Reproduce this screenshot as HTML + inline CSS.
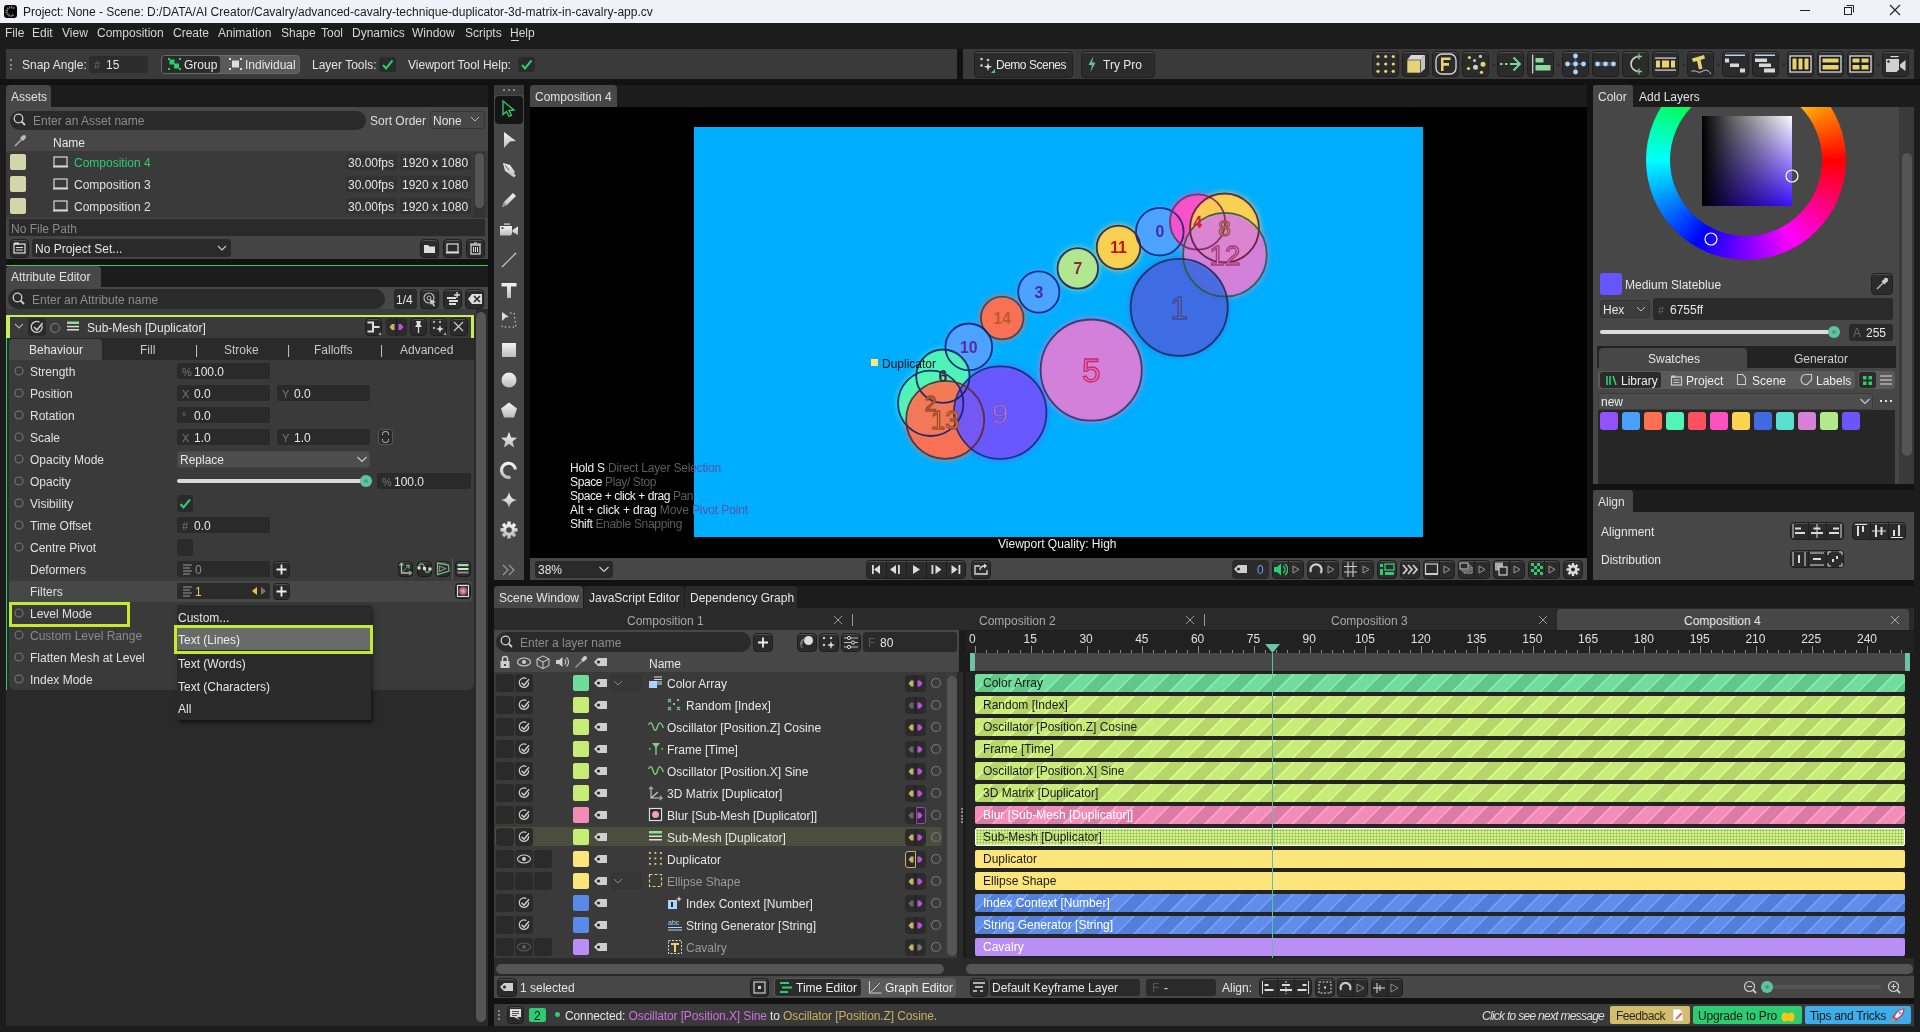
<!DOCTYPE html><html><head><meta charset="utf-8"><style>
html,body{margin:0;padding:0;}
body{width:1920px;height:1032px;position:relative;overflow:hidden;background:#1c1c1c;font-family:"Liberation Sans",sans-serif;font-size:12px;}
body div{position:absolute;box-sizing:border-box;}
.t{position:absolute;white-space:nowrap;line-height:14px;height:14px;}
</style></head><body>
<div style="left:0px;top:0px;width:1920px;height:23px;background:#eff2f9;"></div>
<div style="left:3.5px;top:4.5px;width:13px;height:13px;background:#050505;border-radius:3px;"></div>
<svg style="position:absolute;left:3.5px;top:4.5px;" width="13" height="13" viewBox="0 0 13 13"><path d="M10 3.5 A4.3 4.3 0 1 0 10 9.5" fill="none" stroke="#8a8a8a" stroke-width="2.2" stroke-dasharray="1.2 0.8"/></svg>
<span class="t" style="left:23px;top:5px;color:#1b1b1b;font-size:12px;">Project: None - Scene: D:/DATA/AI Creator/Cavalry/advanced-cavalry-technique-duplicator-3d-matrix-in-cavalry-app.cv</span>
<svg style="position:absolute;left:1798px;top:3px;" width="14" height="14" viewBox="0 0 14 14"><line x1="2" y1="7.5" x2="12" y2="7.5" stroke="#222" stroke-width="1"/></svg>
<svg style="position:absolute;left:1842px;top:3px;" width="14" height="14" viewBox="0 0 14 14"><rect x="2.5" y="4.5" width="7" height="7" fill="none" stroke="#222"/><path d="M4.5 2.5 H11.5 V9.5" fill="none" stroke="#222"/></svg>
<svg style="position:absolute;left:1888px;top:3px;" width="14" height="14" viewBox="0 0 14 14"><path d="M2 2 L12 12 M12 2 L2 12" stroke="#222" stroke-width="1.1"/></svg>
<span class="t" style="left:5px;top:26px;color:#d6d6d6;font-size:12px;">File</span>
<span class="t" style="left:32px;top:26px;color:#d6d6d6;font-size:12px;">Edit</span>
<span class="t" style="left:62px;top:26px;color:#d6d6d6;font-size:12px;">View</span>
<span class="t" style="left:97px;top:26px;color:#d6d6d6;font-size:12px;">Composition</span>
<span class="t" style="left:173px;top:26px;color:#d6d6d6;font-size:12px;">Create</span>
<span class="t" style="left:218px;top:26px;color:#d6d6d6;font-size:12px;">Animation</span>
<span class="t" style="left:281px;top:26px;color:#d6d6d6;font-size:12px;">Shape</span>
<span class="t" style="left:321px;top:26px;color:#d6d6d6;font-size:12px;">Tool</span>
<span class="t" style="left:352px;top:26px;color:#d6d6d6;font-size:12px;">Dynamics</span>
<span class="t" style="left:412px;top:26px;color:#d6d6d6;font-size:12px;">Window</span>
<span class="t" style="left:465px;top:26px;color:#d6d6d6;font-size:12px;">Scripts</span>
<span class="t" style="left:510px;top:26px;color:#d6d6d6;font-size:12px;">Help</span>
<div style="left:6px;top:49px;width:951px;height:30px;background:#3a3a3a;"></div>
<div style="left:963px;top:49px;width:951px;height:30px;background:#3a3a3a;"></div>
<div style="left:0px;top:79px;width:1920px;height:6px;background:#121212;"></div>
<div style="left:10px;top:59px;width:2px;height:2px;background:#8a8a8a"></div>
<div style="left:10px;top:63.5px;width:2px;height:2px;background:#8a8a8a"></div>
<div style="left:10px;top:68px;width:2px;height:2px;background:#8a8a8a"></div>
<div style="left:983px;top:59px;width:2px;height:2px;background:#8a8a8a"></div>
<div style="left:983px;top:63.5px;width:2px;height:2px;background:#8a8a8a"></div>
<div style="left:983px;top:68px;width:2px;height:2px;background:#8a8a8a"></div>
<span class="t" style="left:22px;top:58px;color:#e4e4e4;font-size:12px;">Snap Angle:</span>
<div style="left:89px;top:56px;width:59px;height:17px;background:#2c2c2c;border-radius:3px;"></div>
<span class="t" style="left:94px;top:58px;color:#6a6a6a;font-size:11px;">#</span>
<span class="t" style="left:106px;top:58px;color:#e4e4e4;font-size:12px;">15</span>
<div style="left:161px;top:55px;width:139px;height:19px;background:#5a5a5a;border-radius:4px;border:1px solid #6a6a6a;"></div>
<div style="left:162px;top:56px;width:58px;height:17px;background:#2a2a2a;border-radius:3px;"></div>
<svg style="position:absolute;left:168px;top:58px;" width="13" height="12" viewBox="0 0 13 12"><rect x="0" y="0" width="2" height="2" fill="#2ecc71"/><rect x="11" y="0" width="2" height="2" fill="#2ecc71"/><rect x="0" y="10" width="2" height="2" fill="#2ecc71"/><rect x="11" y="10" width="2" height="2" fill="#2ecc71"/><rect x="1.5" y="1.5" width="5" height="5" fill="#2ecc71"/><rect x="6" y="5.5" width="5" height="5" fill="#2ecc71"/></svg>
<span class="t" style="left:184px;top:58px;color:#e8e8e8;font-size:12px;">Group</span>
<svg style="position:absolute;left:229px;top:58px;" width="13" height="12" viewBox="0 0 13 12"><rect x="0" y="0" width="2" height="2" fill="#ddd"/><rect x="11" y="0" width="2" height="2" fill="#ddd"/><rect x="0" y="10" width="2" height="2" fill="#ddd"/><rect x="11" y="10" width="2" height="2" fill="#ddd"/><rect x="3" y="2.5" width="7" height="7" fill="#ddd"/></svg>
<span class="t" style="left:245px;top:58px;color:#e8e8e8;font-size:12px;">Individual</span>
<span class="t" style="left:312px;top:58px;color:#e4e4e4;font-size:12px;">Layer Tools:</span>
<div style="left:379px;top:57px;width:17px;height:15px;background:#2a2a2a;border-radius:3px;"></div>
<svg style="position:absolute;left:380px;top:58px;" width="15" height="13" viewBox="0 0 15 13"><path d="M3 7 L6 10.5 L12.5 2.5" fill="none" stroke="#2ecc71" stroke-width="2"/></svg>
<span class="t" style="left:408px;top:58px;color:#e4e4e4;font-size:12px;">Viewport Tool Help:</span>
<div style="left:518px;top:57px;width:17px;height:15px;background:#2a2a2a;border-radius:3px;"></div>
<svg style="position:absolute;left:519px;top:58px;" width="15" height="13" viewBox="0 0 15 13"><path d="M3 7 L6 10.5 L12.5 2.5" fill="none" stroke="#2ecc71" stroke-width="2"/></svg>
<div style="left:974px;top:51px;width:99px;height:27px;background:#2b2b2b;background:#2b2b2b;border:1px solid #1f1f1f;border-radius:4px;box-shadow:inset 0 1px 0 #525252;"></div>
<svg style="position:absolute;left:979px;top:56px;" width="16" height="17" viewBox="0 0 16 17"><circle cx="2.5" cy="3" r="1.3" fill="#ccc"/><circle cx="9" cy="4" r="1.3" fill="#ccc"/><circle cx="2.5" cy="9.5" r="1.3" fill="#ccc"/><path d="M9 6.5 L10 9.8 L13.3 10.8 L10 11.8 L9 15 L8 11.8 L4.7 10.8 L8 9.8Z" fill="#ddd"/><path d="M16 13 L16 17 L12 17Z" fill="#5fc3a0"/></svg>
<span class="t" style="left:996px;top:58px;color:#e8e8e8;font-size:12px;letter-spacing:-0.487px;">Demo Scenes</span>
<div style="left:1076px;top:63px;width:2px;height:2px;background:#2a2a2a;border-radius:1px"></div>
<div style="left:1081px;top:51px;width:74px;height:27px;background:#2b2b2b;background:#2b2b2b;border:1px solid #1f1f1f;border-radius:4px;box-shadow:inset 0 1px 0 #525252;"></div>
<svg style="position:absolute;left:1086px;top:55px;" width="12" height="18" viewBox="0 0 12 18"><path d="M7.5 1 L2.5 10 L6 10 L4.5 17 L9.5 7.5 L6 7.5 Z" fill="#5fc3a0"/></svg>
<span class="t" style="left:1103px;top:58px;color:#e8e8e8;font-size:12px;">Try Pro</span>
<div style="left:1372px;top:51px;width:27px;height:26px;background:#2b2b2b;background:#2b2b2b;border:1px solid #1f1f1f;border-radius:4px;box-shadow:inset 0 1px 0 #525252;"></div>
<svg style="position:absolute;left:1372px;top:51px;" width="27" height="26" viewBox="0 0 27 26"><g fill="#e6d46a"><circle cx="6" cy="5.5" r="1.6"/><circle cx="6" cy="13" r="1.6"/><circle cx="6" cy="20.3" r="1.6"/><circle cx="13.7" cy="5.5" r="1.6"/><circle cx="13.7" cy="13" r="1.6"/><circle cx="13.7" cy="20.3" r="1.6"/><circle cx="21.3" cy="5.5" r="1.6"/><circle cx="21.3" cy="13" r="1.6"/><circle cx="21.3" cy="20.3" r="1.6"/></g></svg>
<div style="left:1402px;top:51px;width:27px;height:26px;background:#2b2b2b;background:#2b2b2b;border:1px solid #1f1f1f;border-radius:4px;box-shadow:inset 0 1px 0 #525252;"></div>
<svg style="position:absolute;left:1402px;top:51px;" width="27" height="26" viewBox="0 0 27 26"><path d="M5 9 L9 4 L23 4 L18.5 9Z" fill="#d8d8d8"/><path d="M18.5 9 L23 4 L23 17.5 L18.5 22Z" fill="#c4c4c4"/><rect x="5" y="9" width="13.5" height="13" fill="#e3d37a" stroke="#2a2a2a" stroke-width="0.6"/></svg>
<div style="left:1432px;top:51px;width:27px;height:26px;background:#2b2b2b;background:#2b2b2b;border:1px solid #1f1f1f;border-radius:4px;box-shadow:inset 0 1px 0 #525252;"></div>
<svg style="position:absolute;left:1432px;top:51px;" width="27" height="26" viewBox="0 0 27 26"><rect x="4" y="3" width="20" height="20" rx="6" fill="none" stroke="#d8d8d8" stroke-width="1.3"/><path d="M9 6.5 H18.5 V9 H11.5 V12 H17 V14.7 H11.5 V20 H9Z" fill="#e6d46a"/></svg>
<div style="left:1462px;top:51px;width:27px;height:26px;background:#2b2b2b;background:#2b2b2b;border:1px solid #1f1f1f;border-radius:4px;box-shadow:inset 0 1px 0 #525252;"></div>
<svg style="position:absolute;left:1462px;top:51px;" width="27" height="26" viewBox="0 0 27 26"><circle cx="7.4" cy="6.5" r="1.6" fill="#e6d46a"/><circle cx="18.4" cy="5.4" r="1.6" fill="#ccc"/><circle cx="12.5" cy="9.5" r="1.5" fill="#ccc"/><circle cx="21" cy="13.2" r="2.5" fill="#e6d46a"/><circle cx="13.5" cy="16.3" r="2.5" fill="#ccc"/><circle cx="6.5" cy="17.5" r="1.6" fill="#e6d46a"/><circle cx="19.5" cy="21.3" r="1.6" fill="#e6d46a"/></svg>
<div style="left:1497px;top:51px;width:27px;height:26px;background:#2b2b2b;background:#2b2b2b;border:1px solid #1f1f1f;border-radius:4px;box-shadow:inset 0 1px 0 #525252;"></div>
<svg style="position:absolute;left:1497px;top:51px;" width="27" height="26" viewBox="0 0 27 26"><path d="M3 13 H5.5 M8 13 H10.5 M13 13 H22" stroke="#7dd69a" stroke-width="1.8"/><path d="M16.5 6.5 L23 13 L16.5 19.5" fill="none" stroke="#7dd69a" stroke-width="1.8"/></svg>
<div style="left:1527px;top:51px;width:27px;height:26px;background:#2b2b2b;background:#2b2b2b;border:1px solid #1f1f1f;border-radius:4px;box-shadow:inset 0 1px 0 #525252;"></div>
<svg style="position:absolute;left:1527px;top:51px;" width="27" height="26" viewBox="0 0 27 26"><rect x="5" y="3.5" width="1.3" height="19" fill="#cfcfcf"/><rect x="8.5" y="7" width="8" height="4.5" fill="#8fd9a0"/><rect x="8.5" y="14" width="15" height="5.5" fill="#8fd9a0"/></svg>
<div style="left:1562px;top:51px;width:27px;height:26px;background:#2b2b2b;background:#2b2b2b;border:1px solid #1f1f1f;border-radius:4px;box-shadow:inset 0 1px 0 #525252;"></div>
<svg style="position:absolute;left:1562px;top:51px;" width="27" height="26" viewBox="0 0 27 26"><rect x="12.5" y="4" width="2" height="18" fill="#505050"/><rect x="5" y="12" width="17" height="2" fill="#505050"/><g fill="#a8d4ff"><circle cx="13.5" cy="13" r="2.4"/><circle cx="5.5" cy="13" r="2.4"/><circle cx="21.5" cy="13" r="2.4"/><circle cx="13.5" cy="5" r="2.4"/><circle cx="13.5" cy="21" r="2.4"/></g></svg>
<div style="left:1592px;top:51px;width:27px;height:26px;background:#2b2b2b;background:#2b2b2b;border:1px solid #1f1f1f;border-radius:4px;box-shadow:inset 0 1px 0 #525252;"></div>
<svg style="position:absolute;left:1592px;top:51px;" width="27" height="26" viewBox="0 0 27 26"><rect x="5" y="11" width="17" height="4" fill="#505050"/><g fill="#a8d4ff"><circle cx="5.5" cy="13" r="2.4"/><circle cx="13.5" cy="13" r="2.4"/><circle cx="21.5" cy="13" r="2.4"/></g></svg>
<div style="left:1622px;top:51px;width:27px;height:26px;background:#2b2b2b;background:#2b2b2b;border:1px solid #1f1f1f;border-radius:4px;box-shadow:inset 0 1px 0 #525252;"></div>
<svg style="position:absolute;left:1622px;top:51px;" width="27" height="26" viewBox="0 0 27 26"><path d="M17 5.5 A8 7.5 0 0 0 17 20.5" fill="none" stroke="#d4d4d4" stroke-width="1.6"/><path d="M17 2.5 V8.5 M14 5.5 H20 M17 17.5 V23.5 M14 20.5 H20" stroke="#7fc58f" stroke-width="1.3"/></svg>
<div style="left:1652px;top:51px;width:27px;height:26px;background:#2b2b2b;background:#2b2b2b;border:1px solid #1f1f1f;border-radius:4px;box-shadow:inset 0 1px 0 #525252;"></div>
<svg style="position:absolute;left:1652px;top:51px;" width="27" height="26" viewBox="0 0 27 26"><rect x="3" y="6.5" width="21" height="1.2" fill="#ddd"/><rect x="3" y="18.5" width="21" height="1.2" fill="#ddd"/><g fill="#e6d46a"><rect x="4" y="9.5" width="4" height="7"/><rect x="10" y="9.5" width="7" height="7"/><rect x="19" y="9.5" width="4" height="7"/></g></svg>
<div style="left:1687px;top:51px;width:27px;height:26px;background:#2b2b2b;background:#2b2b2b;border:1px solid #1f1f1f;border-radius:4px;box-shadow:inset 0 1px 0 #525252;"></div>
<svg style="position:absolute;left:1687px;top:51px;" width="27" height="26" viewBox="0 0 27 26"><path d="M5 7.5 L17 4 L18 7.5 L13.5 9 L15.5 17.5 L12 18.5 L10 10 L6 11Z" fill="#e6d46a"/><path d="M4.5 20.5 C8 18 11 23 15 20.5 S21 19 24 23" fill="none" stroke="#ccc" stroke-width="1"/></svg>
<div style="left:1722px;top:51px;width:27px;height:26px;background:#2b2b2b;background:#2b2b2b;border:1px solid #1f1f1f;border-radius:4px;box-shadow:inset 0 1px 0 #525252;"></div>
<svg style="position:absolute;left:1722px;top:51px;" width="27" height="26" viewBox="0 0 27 26"><rect x="3" y="3.5" width="20" height="1.5" fill="#a8d8ff"/><g fill="#d8d8d8"><rect x="3" y="7.5" width="4" height="4"/><rect x="8" y="12.5" width="9" height="3.5"/><rect x="18" y="17.5" width="5" height="4"/></g></svg>
<div style="left:1752px;top:51px;width:27px;height:26px;background:#2b2b2b;background:#2b2b2b;border:1px solid #1f1f1f;border-radius:4px;box-shadow:inset 0 1px 0 #525252;"></div>
<svg style="position:absolute;left:1752px;top:51px;" width="27" height="26" viewBox="0 0 27 26"><rect x="3" y="3.5" width="20" height="1.5" fill="#a8d8ff"/><g fill="#d8d8d8"><rect x="3" y="7.5" width="12" height="3.5"/><rect x="7" y="12.5" width="12" height="3.5"/><rect x="12" y="17.5" width="11" height="4"/></g></svg>
<div style="left:1787px;top:51px;width:27px;height:26px;background:#2b2b2b;background:#2b2b2b;border:1px solid #1f1f1f;border-radius:4px;box-shadow:inset 0 1px 0 #525252;"></div>
<svg style="position:absolute;left:1787px;top:51px;" width="27" height="26" viewBox="0 0 27 26"><rect x="3" y="5" width="21" height="16" fill="#1c1c1c" stroke="#ddd" stroke-width="1.3"/><g fill="#e6d46a"><rect x="5.5" y="7.5" width="4" height="11"/><rect x="11.5" y="7.5" width="4" height="11"/><rect x="17.5" y="7.5" width="4" height="11"/></g></svg>
<div style="left:1817px;top:51px;width:27px;height:26px;background:#2b2b2b;background:#2b2b2b;border:1px solid #1f1f1f;border-radius:4px;box-shadow:inset 0 1px 0 #525252;"></div>
<svg style="position:absolute;left:1817px;top:51px;" width="27" height="26" viewBox="0 0 27 26"><rect x="3" y="5" width="21" height="16" fill="#1c1c1c" stroke="#ddd" stroke-width="1.3"/><g fill="#e6d46a"><rect x="5.5" y="7.5" width="16" height="4"/><rect x="5.5" y="14" width="16" height="4.5"/></g></svg>
<div style="left:1847px;top:51px;width:27px;height:26px;background:#2b2b2b;background:#2b2b2b;border:1px solid #1f1f1f;border-radius:4px;box-shadow:inset 0 1px 0 #525252;"></div>
<svg style="position:absolute;left:1847px;top:51px;" width="27" height="26" viewBox="0 0 27 26"><rect x="3" y="5" width="21" height="16" fill="#1c1c1c" stroke="#ddd" stroke-width="1.3"/><g fill="#e6d46a"><rect x="5.5" y="7.5" width="7" height="4"/><rect x="14.5" y="7.5" width="7" height="4"/><rect x="5.5" y="14" width="7" height="4.5"/><rect x="14.5" y="14" width="7" height="4.5"/></g></svg>
<div style="left:1882px;top:51px;width:27px;height:26px;background:#2b2b2b;background:#2b2b2b;border:1px solid #1f1f1f;border-radius:4px;box-shadow:inset 0 1px 0 #525252;"></div>
<svg style="position:absolute;left:1882px;top:51px;" width="27" height="26" viewBox="0 0 27 26"><rect x="8.5" y="5" width="8" height="1.2" fill="#ddd"/><path d="M4 8 H17 V18.5 L14.5 21 H4Z" fill="#d0d0d0"/><circle cx="6.5" cy="10.5" r="1.3" fill="#2b2b2b"/><path d="M18 13.5 L23.5 9 V20 L18 16Z" fill="#d0d0d0"/></svg>
<div style="left:1492px;top:63px;width:3px;height:3px;background:#2a2a2a;border-radius:2px"></div>
<div style="left:1557px;top:63px;width:3px;height:3px;background:#2a2a2a;border-radius:2px"></div>
<div style="left:1682px;top:63px;width:3px;height:3px;background:#2a2a2a;border-radius:2px"></div>
<div style="left:1717px;top:63px;width:3px;height:3px;background:#2a2a2a;border-radius:2px"></div>
<div style="left:1782px;top:63px;width:3px;height:3px;background:#2a2a2a;border-radius:2px"></div>
<div style="left:1877px;top:63px;width:3px;height:3px;background:#2a2a2a;border-radius:2px"></div>
<div style="left:6px;top:85px;width:482px;height:22px;background:#1c1c1c;"></div>
<div style="left:6px;top:85px;width:45px;height:22px;background:#474747;border-radius:4px 4px 0 0;"></div>
<span class="t" style="left:11px;top:90px;color:#e0e0e0;font-size:12px;">Assets</span>
<div style="left:6px;top:107px;width:482px;height:151px;background:#3a3a3a;"></div>
<div style="left:6px;top:259px;width:482px;height:6px;background:#121212;"></div>
<div style="left:6px;top:265px;width:482px;height:1px;background:#2ecc71;"></div>
<div style="left:6px;top:266px;width:482px;height:21px;background:#1c1c1c;"></div>
<div style="left:6px;top:266px;width:95px;height:21px;background:#474747;border-radius:4px 4px 0 0;"></div>
<span class="t" style="left:11px;top:270px;color:#e0e0e0;font-size:12px;">Attribute Editor</span>
<div style="left:6px;top:287px;width:482px;height:739px;background:#2a2a2a;"></div>
<div style="left:6px;top:107px;width:482px;height:44px;background:#474747;"></div>
<div style="left:10px;top:111px;width:356px;height:19px;background:#2a2a2a;border-radius:10px;"></div>
<svg style="position:absolute;left:13px;top:113px;" width="14" height="14" viewBox="0 0 14 14"><circle cx="5.5" cy="5.5" r="4.3" fill="none" stroke="#d0d0d0" stroke-width="1.3"/><path d="M8.6 8.6 L12 12" stroke="#d0d0d0" stroke-width="1.8"/></svg>
<span class="t" style="left:33px;top:114px;color:#8c8c8c;font-size:12px;">Enter an Asset name</span>
<span class="t" style="left:370px;top:114px;color:#dedede;font-size:12px;">Sort Order</span>
<div style="left:430px;top:111px;width:55px;height:18px;background:#474747;border:1px solid #363636;border-radius:3px;"></div>
<span class="t" style="left:433px;top:114px;color:#e0e0e0;font-size:12px;">None</span>
<svg style="position:absolute;left:470px;top:115px;" width="10" height="8" viewBox="0 0 10 8"><path d="M1 2 L5 6 L9 2" fill="none" stroke="#bbb" stroke-width="1"/></svg>
<div style="left:6px;top:130px;width:482px;height:21px;background:#474747;"></div>
<svg style="position:absolute;left:13px;top:134px;" width="14" height="14" viewBox="0 0 14 14"><path d="M2 12 L9 5" stroke="#aaa" stroke-width="1.6"/><path d="M8 3 L11 6" stroke="#bbb" stroke-width="2.6"/><circle cx="11" cy="3" r="2" fill="#bbb"/></svg>
<span class="t" style="left:53px;top:136px;color:#e6e6e6;font-size:12px;">Name</span>
<div style="left:6px;top:151px;width:482px;height:67px;background:#3a3a3a;"></div>
<div style="left:10px;top:154px;width:16px;height:16px;background:#d2d6a8;border-radius:2px;"></div>
<svg style="position:absolute;left:53px;top:156px;" width="15" height="12" viewBox="0 0 15 12"><rect x="1" y="1" width="13" height="9" fill="none" stroke="#d8d8d8" stroke-width="1.2"/><rect x="0" y="10" width="15" height="1.5" fill="#d8d8d8"/></svg>
<span class="t" style="left:74px;top:156px;color:#2ecc71;font-size:12px;">Composition 4</span>
<div style="left:346px;top:154px;width:51px;height:16px;background:#333333;border-radius:2px;"></div>
<span class="t" style="left:348px;top:156px;color:#e6e6e6;font-size:12px;">30.00fps</span>
<div style="left:400px;top:154px;width:71px;height:16px;background:#333333;border-radius:2px;"></div>
<span class="t" style="left:402px;top:156px;color:#e6e6e6;font-size:12px;">1920 x 1080</span>
<div style="left:10px;top:176px;width:16px;height:16px;background:#d2d6a8;border-radius:2px;"></div>
<svg style="position:absolute;left:53px;top:178px;" width="15" height="12" viewBox="0 0 15 12"><rect x="1" y="1" width="13" height="9" fill="none" stroke="#d8d8d8" stroke-width="1.2"/><rect x="0" y="10" width="15" height="1.5" fill="#d8d8d8"/></svg>
<span class="t" style="left:74px;top:178px;color:#e0e0e0;font-size:12px;">Composition 3</span>
<div style="left:346px;top:176px;width:51px;height:16px;background:#333333;border-radius:2px;"></div>
<span class="t" style="left:348px;top:178px;color:#e6e6e6;font-size:12px;">30.00fps</span>
<div style="left:400px;top:176px;width:71px;height:16px;background:#333333;border-radius:2px;"></div>
<span class="t" style="left:402px;top:178px;color:#e6e6e6;font-size:12px;">1920 x 1080</span>
<div style="left:10px;top:198px;width:16px;height:16px;background:#d2d6a8;border-radius:2px;"></div>
<svg style="position:absolute;left:53px;top:200px;" width="15" height="12" viewBox="0 0 15 12"><rect x="1" y="1" width="13" height="9" fill="none" stroke="#d8d8d8" stroke-width="1.2"/><rect x="0" y="10" width="15" height="1.5" fill="#d8d8d8"/></svg>
<span class="t" style="left:74px;top:200px;color:#e0e0e0;font-size:12px;">Composition 2</span>
<div style="left:346px;top:198px;width:51px;height:16px;background:#333333;border-radius:2px;"></div>
<span class="t" style="left:348px;top:200px;color:#e6e6e6;font-size:12px;">30.00fps</span>
<div style="left:400px;top:198px;width:71px;height:16px;background:#333333;border-radius:2px;"></div>
<span class="t" style="left:402px;top:200px;color:#e6e6e6;font-size:12px;">1920 x 1080</span>
<div style="left:474px;top:152px;width:11px;height:66px;background:#333;"></div>
<div style="left:475px;top:153px;width:9px;height:55px;background:#555;border-radius:5px;"></div>
<div style="left:6px;top:218px;width:482px;height:41px;background:#444444;"></div>
<div style="left:9px;top:219px;width:476px;height:17px;background:#2a2a2a;"></div>
<span class="t" style="left:11px;top:222px;color:#8a8a8a;font-size:12px;">No File Path</span>
<div style="left:10px;top:239px;width:19px;height:19px;background:#2b2b2b;background:#2b2b2b;border:1px solid #1f1f1f;border-radius:4px;box-shadow:inset 0 1px 0 #505050;"></div>
<svg style="position:absolute;left:12px;top:241px;" width="15" height="15" viewBox="0 0 15 15"><rect x="2" y="3" width="11" height="9" fill="none" stroke="#ddd" stroke-width="1.2"/><rect x="2" y="1.5" width="5" height="2" fill="#ddd"/><path d="M4 6.5 H11 M4 9 H11" stroke="#ddd" stroke-width="1"/></svg>
<div style="left:32px;top:239px;width:199px;height:18px;background:#2a2a2a;border-radius:3px;"></div>
<span class="t" style="left:35px;top:242px;color:#e6e6e6;font-size:12px;">No Project Set...</span>
<svg style="position:absolute;left:217px;top:244px;" width="10" height="8" viewBox="0 0 10 8"><path d="M1 2 L5 6 L9 2" fill="none" stroke="#ccc" stroke-width="1.1"/></svg>
<div style="left:420px;top:239px;width:19px;height:19px;background:#2b2b2b;background:#2b2b2b;border:1px solid #1f1f1f;border-radius:4px;box-shadow:inset 0 1px 0 #505050;"></div>
<svg style="position:absolute;left:422px;top:241px;" width="15" height="15" viewBox="0 0 15 15"><path d="M2 4 H6 L7.5 5.5 H13 V12 H2Z" fill="#ddd"/></svg>
<div style="left:443px;top:239px;width:19px;height:19px;background:#2b2b2b;background:#2b2b2b;border:1px solid #1f1f1f;border-radius:4px;box-shadow:inset 0 1px 0 #505050;"></div>
<svg style="position:absolute;left:445px;top:241px;" width="15" height="15" viewBox="0 0 15 15"><rect x="2" y="3" width="11" height="8" fill="none" stroke="#ddd" stroke-width="1.2"/><rect x="1" y="11" width="13" height="1.5" fill="#ddd"/></svg>
<div style="left:466px;top:239px;width:19px;height:19px;background:#2b2b2b;background:#2b2b2b;border:1px solid #1f1f1f;border-radius:4px;box-shadow:inset 0 1px 0 #505050;"></div>
<svg style="position:absolute;left:468px;top:241px;" width="15" height="15" viewBox="0 0 15 15"><rect x="3" y="4" width="9" height="9" fill="none" stroke="#ddd" stroke-width="1.2"/><path d="M2 3 H13 M6 2 H9 M5.5 6 V11 M7.5 6 V11 M9.5 6 V11" stroke="#ddd" stroke-width="1"/></svg>
<div style="left:6px;top:287px;width:482px;height:22px;background:#474747;"></div>
<div style="left:8px;top:289px;width:377px;height:20px;background:#2a2a2a;border-radius:10px;"></div>
<svg style="position:absolute;left:12px;top:292px;" width="14" height="14" viewBox="0 0 14 14"><circle cx="5.5" cy="5.5" r="4.3" fill="none" stroke="#d0d0d0" stroke-width="1.3"/><path d="M8.6 8.6 L12 12" stroke="#d0d0d0" stroke-width="1.8"/></svg>
<span class="t" style="left:32px;top:293px;color:#8c8c8c;font-size:12px;">Enter an Attribute name</span>
<div style="left:394px;top:289px;width:23px;height:20px;background:#2a2a2a;border-radius:3px;"></div>
<span class="t" style="left:396px;top:293px;color:#e6e6e6;font-size:12px;">1/4</span>
<div style="left:420px;top:289px;width:19px;height:20px;background:#2b2b2b;background:#2b2b2b;border:1px solid #1f1f1f;border-radius:4px;box-shadow:inset 0 1px 0 #505050;"></div>
<svg style="position:absolute;left:422px;top:291px;" width="16" height="16" viewBox="0 0 16 16"><circle cx="7" cy="7" r="5" fill="none" stroke="#bbb" stroke-width="1.2"/><circle cx="7" cy="7" r="2" fill="none" stroke="#bbb"/><path d="M8 8 L14 11 L11.5 12 L13 15 L11.5 15.5 L10 12.5 L8.5 14Z" fill="#ccc"/></svg>
<div style="left:443px;top:289px;width:19px;height:20px;background:#2b2b2b;background:#2b2b2b;border:1px solid #1f1f1f;border-radius:4px;box-shadow:inset 0 1px 0 #505050;"></div>
<svg style="position:absolute;left:445px;top:291px;" width="16" height="16" viewBox="0 0 16 16"><path d="M2 7 H11 M4 10 H13 M4 13 H11" stroke="#ddd" stroke-width="1.8"/><path d="M12 1 V7 M9 4 H15" stroke="#ddd" stroke-width="1.3"/></svg>
<div style="left:465px;top:289px;width:19px;height:20px;background:#2b2b2b;background:#2b2b2b;border:1px solid #1f1f1f;border-radius:4px;box-shadow:inset 0 1px 0 #505050;"></div>
<svg style="position:absolute;left:467px;top:291px;" width="16" height="16" viewBox="0 0 16 16"><path d="M5 3 H15 V13 H5 L1 8Z" fill="#ddd"/><path d="M7 5 L13 11 M13 5 L7 11" stroke="#2b2b2b" stroke-width="1.6"/></svg>
<div style="left:6px;top:309px;width:470px;height:6px;background:#3d3d3d;"></div>
<div style="left:6px;top:315px;width:468px;height:23px;background:#3a3a3a;border-top:2px solid #c6f05a;border-left:4px solid #c6f05a;border-right:3px solid #c6f05a;"></div>
<svg style="position:absolute;left:14px;top:322px;" width="10" height="8" viewBox="0 0 10 8"><path d="M1 2 L5 6 L9 2" fill="none" stroke="#aaa" stroke-width="1.1"/></svg>
<div style="left:28px;top:318px;width:18px;height:18px;background:#2a2a2a;border-radius:3px;"></div>
<svg style="position:absolute;left:29px;top:319px;" width="16" height="16" viewBox="0 0 16 16"><path d="M13 6.5 A5.5 5.5 0 1 1 10.5 3.2" fill="none" stroke="#d0d0d0" stroke-width="1.3"/><path d="M5 8 L8 11 L13.5 4" fill="none" stroke="#d0d0d0" stroke-width="1.5"/></svg>
<svg style="position:absolute;left:49px;top:322px;" width="12" height="12" viewBox="0 0 12 12"><circle cx="6" cy="6" r="4.5" fill="none" stroke="#777" stroke-width="1.2"/></svg>
<svg style="position:absolute;left:66px;top:321px;" width="14" height="12" viewBox="0 0 14 12"><rect x="1" y="0.5" width="12" height="2.5" fill="#8fe08f"/><rect x="1" y="4.8" width="12" height="1.5" fill="#ddd"/><rect x="1" y="8" width="12" height="1.5" fill="#ddd"/></svg>
<span class="t" style="left:87px;top:321px;color:#e6e6e6;font-size:12px;">Sub-Mesh [Duplicator]</span>
<div style="left:365px;top:318px;width:17px;height:18px;background:#2b2b2b;background:#2b2b2b;border:1px solid #1f1f1f;border-radius:4px;box-shadow:inset 0 1px 0 #505050;"></div>
<svg style="position:absolute;left:365px;top:318px;" width="17" height="18" viewBox="0 0 17 18"><path d="M2.5 4.5 H8 V13.5 H2.5 M8 9 H14.5" fill="none" stroke="#ddd" stroke-width="2"/><path d="M16 14 V17 H13Z" fill="#5fc3a0"/></svg>
<div style="left:430px;top:318px;width:17px;height:18px;background:#2b2b2b;background:#2b2b2b;border:1px solid #1f1f1f;border-radius:4px;box-shadow:inset 0 1px 0 #505050;"></div>
<svg style="position:absolute;left:430px;top:318px;" width="17" height="18" viewBox="0 0 17 18"><circle cx="4" cy="4" r="1.1" fill="#ccc"/><circle cx="10" cy="4" r="1.1" fill="#ccc"/><circle cx="4" cy="10" r="1.1" fill="#ccc"/><path d="M10 7 L11 10 L14 11 L11 12 L10 15 L9 12 L6 11 L9 10Z" fill="#ddd"/><path d="M16 14 V17 H13Z" fill="#5fc3a0"/></svg>
<div style="left:450px;top:318px;width:18px;height:18px;background:#2b2b2b;background:#2b2b2b;border:1px solid #1f1f1f;border-radius:4px;box-shadow:inset 0 1px 0 #505050;"></div>
<svg style="position:absolute;left:450px;top:318px;" width="18" height="18" viewBox="0 0 18 18"><path d="M4 4 L13 13 M13 4 L4 13" stroke="#ccc" stroke-width="1.1"/></svg>
<div style="left:386px;top:318px;width:21px;height:18px;background:#2b2b2b;border-radius:4px;"></div>
<svg style="position:absolute;left:386px;top:318px;" width="21" height="18" viewBox="0 0 21 18"><path d="M3.5 9 L6 6 H8.5 V12 H6Z" fill="#c9b26a"/><path d="M12.5 6 H15 L17.5 9 L15 12 H12.5Z" fill="#c050e0"/><rect x="10" y="0" width="1" height="18" fill="#1c1c1c"/></svg>
<div style="left:410px;top:318px;width:17px;height:18px;background:#2b2b2b;background:#2b2b2b;border:1px solid #1f1f1f;border-radius:4px;box-shadow:inset 0 1px 0 #505050;"></div>
<svg style="position:absolute;left:410px;top:318px;" width="17" height="18" viewBox="0 0 17 18"><path d="M6 3 H11 L10 6 L12 9 H5 L7 6Z" fill="#ddd"/><path d="M8.5 9 V15" stroke="#ddd" stroke-width="1.3"/></svg>
<div style="left:6px;top:338px;width:468px;height:22px;background:#2a2a2a;"></div>
<div style="left:9px;top:339px;width:93px;height:21px;background:#474747;border-radius:4px 4px 0 0;"></div>
<span class="t" style="left:29px;top:343px;color:#e6e6e6;font-size:12px;">Behaviour</span>
<span class="t" style="left:140px;top:343px;color:#c8c8c8;font-size:12px;">Fill</span>
<span class="t" style="left:195px;top:343px;color:#c8c8c8;font-size:12px;">|</span>
<span class="t" style="left:224px;top:343px;color:#c8c8c8;font-size:12px;">Stroke</span>
<span class="t" style="left:287px;top:343px;color:#c8c8c8;font-size:12px;">|</span>
<span class="t" style="left:314px;top:343px;color:#c8c8c8;font-size:12px;">Falloffs</span>
<span class="t" style="left:380px;top:343px;color:#c8c8c8;font-size:12px;">|</span>
<span class="t" style="left:400px;top:343px;color:#c8c8c8;font-size:12px;">Advanced</span>
<div style="left:6px;top:338px;width:1px;height:352px;background:#2ecc71;"></div>
<div style="left:9px;top:360px;width:465px;height:330px;background:#3a3a3a;border-radius:0 0 6px 6px;"></div>
<div style="left:9px;top:581px;width:463px;height:21px;background:#474747;border-radius:3px;"></div>
<svg style="position:absolute;left:14px;top:366px;" width="10" height="10" viewBox="0 0 10 10"><circle cx="5" cy="5" r="4" fill="none" stroke="#777" stroke-width="1.1"/></svg>
<span class="t" style="left:30px;top:365px;color:#e0e0e0;font-size:12px;">Strength</span>
<svg style="position:absolute;left:14px;top:388px;" width="10" height="10" viewBox="0 0 10 10"><circle cx="5" cy="5" r="4" fill="none" stroke="#777" stroke-width="1.1"/></svg>
<span class="t" style="left:30px;top:387px;color:#e0e0e0;font-size:12px;">Position</span>
<svg style="position:absolute;left:14px;top:410px;" width="10" height="10" viewBox="0 0 10 10"><circle cx="5" cy="5" r="4" fill="none" stroke="#777" stroke-width="1.1"/></svg>
<span class="t" style="left:30px;top:409px;color:#e0e0e0;font-size:12px;">Rotation</span>
<svg style="position:absolute;left:14px;top:432px;" width="10" height="10" viewBox="0 0 10 10"><circle cx="5" cy="5" r="4" fill="none" stroke="#777" stroke-width="1.1"/></svg>
<span class="t" style="left:30px;top:431px;color:#e0e0e0;font-size:12px;">Scale</span>
<svg style="position:absolute;left:14px;top:454px;" width="10" height="10" viewBox="0 0 10 10"><circle cx="5" cy="5" r="4" fill="none" stroke="#777" stroke-width="1.1"/></svg>
<span class="t" style="left:30px;top:453px;color:#e0e0e0;font-size:12px;">Opacity Mode</span>
<svg style="position:absolute;left:14px;top:476px;" width="10" height="10" viewBox="0 0 10 10"><circle cx="5" cy="5" r="4" fill="none" stroke="#777" stroke-width="1.1"/></svg>
<span class="t" style="left:30px;top:475px;color:#e0e0e0;font-size:12px;">Opacity</span>
<svg style="position:absolute;left:14px;top:498px;" width="10" height="10" viewBox="0 0 10 10"><circle cx="5" cy="5" r="4" fill="none" stroke="#777" stroke-width="1.1"/></svg>
<span class="t" style="left:30px;top:497px;color:#e0e0e0;font-size:12px;">Visibility</span>
<svg style="position:absolute;left:14px;top:520px;" width="10" height="10" viewBox="0 0 10 10"><circle cx="5" cy="5" r="4" fill="none" stroke="#777" stroke-width="1.1"/></svg>
<span class="t" style="left:30px;top:519px;color:#e0e0e0;font-size:12px;">Time Offset</span>
<svg style="position:absolute;left:14px;top:542px;" width="10" height="10" viewBox="0 0 10 10"><circle cx="5" cy="5" r="4" fill="none" stroke="#777" stroke-width="1.1"/></svg>
<span class="t" style="left:30px;top:541px;color:#e0e0e0;font-size:12px;">Centre Pivot</span>
<span class="t" style="left:30px;top:563px;color:#e0e0e0;font-size:12px;">Deformers</span>
<span class="t" style="left:30px;top:585px;color:#e0e0e0;font-size:12px;">Filters</span>
<svg style="position:absolute;left:14px;top:608px;" width="10" height="10" viewBox="0 0 10 10"><circle cx="5" cy="5" r="4" fill="none" stroke="#777" stroke-width="1.1"/></svg>
<span class="t" style="left:30px;top:607px;color:#e0e0e0;font-size:12px;">Level Mode</span>
<svg style="position:absolute;left:14px;top:630px;" width="10" height="10" viewBox="0 0 10 10"><circle cx="5" cy="5" r="4" fill="none" stroke="#777" stroke-width="1.1"/></svg>
<span class="t" style="left:30px;top:629px;color:#8a8a8a;font-size:12px;">Custom Level Range</span>
<svg style="position:absolute;left:14px;top:652px;" width="10" height="10" viewBox="0 0 10 10"><circle cx="5" cy="5" r="4" fill="none" stroke="#777" stroke-width="1.1"/></svg>
<span class="t" style="left:30px;top:651px;color:#e0e0e0;font-size:12px;">Flatten Mesh at Level</span>
<svg style="position:absolute;left:14px;top:674px;" width="10" height="10" viewBox="0 0 10 10"><circle cx="5" cy="5" r="4" fill="none" stroke="#777" stroke-width="1.1"/></svg>
<span class="t" style="left:30px;top:673px;color:#e0e0e0;font-size:12px;">Index Mode</span>
<div style="left:177px;top:363px;width:93px;height:16px;background:#2a2a2a;border-radius:2px;"></div>
<span class="t" style="left:182px;top:365px;color:#777;font-size:11px;">%</span>
<span class="t" style="left:194px;top:365px;color:#e6e6e6;font-size:12px;">100.0</span>
<div style="left:177px;top:385px;width:93px;height:16px;background:#2a2a2a;border-radius:2px;"></div>
<span class="t" style="left:182px;top:387px;color:#777;font-size:11px;">X</span>
<span class="t" style="left:194px;top:387px;color:#e6e6e6;font-size:12px;">0.0</span>
<div style="left:277px;top:385px;width:93px;height:16px;background:#2a2a2a;border-radius:2px;"></div>
<span class="t" style="left:282px;top:387px;color:#777;font-size:11px;">Y</span>
<span class="t" style="left:294px;top:387px;color:#e6e6e6;font-size:12px;">0.0</span>
<div style="left:177px;top:407px;width:93px;height:16px;background:#2a2a2a;border-radius:2px;"></div>
<span class="t" style="left:182px;top:409px;color:#777;font-size:11px;">°</span>
<span class="t" style="left:194px;top:409px;color:#e6e6e6;font-size:12px;">0.0</span>
<div style="left:177px;top:429px;width:93px;height:16px;background:#2a2a2a;border-radius:2px;"></div>
<span class="t" style="left:182px;top:431px;color:#777;font-size:11px;">X</span>
<span class="t" style="left:194px;top:431px;color:#e6e6e6;font-size:12px;">1.0</span>
<div style="left:277px;top:429px;width:93px;height:16px;background:#2a2a2a;border-radius:2px;"></div>
<span class="t" style="left:282px;top:431px;color:#777;font-size:11px;">Y</span>
<span class="t" style="left:294px;top:431px;color:#e6e6e6;font-size:12px;">1.0</span>
<div style="left:378px;top:429px;width:15px;height:16px;background:#2a2a2a;border:1px solid #555;border-radius:3px;"></div>
<svg style="position:absolute;left:381px;top:431px;" width="9" height="12" viewBox="0 0 9 12"><path d="M1.5 4 V2.5 A3 2 0 0 1 7.5 2.5 V4 M1.5 8 V9.5 A3 2 0 0 0 7.5 9.5 V8" fill="none" stroke="#bbb" stroke-width="1"/></svg>
<div style="left:177px;top:451px;width:193px;height:17px;background:#4d4d4d;border-radius:3px;border:1px solid #444;"></div>
<span class="t" style="left:180px;top:453px;color:#e6e6e6;font-size:12px;">Replace</span>
<svg style="position:absolute;left:356px;top:455px;" width="12" height="9" viewBox="0 0 12 9"><path d="M1.5 2 L6 6.5 L10.5 2" fill="none" stroke="#ccc" stroke-width="1.1"/></svg>
<div style="left:177px;top:479px;width:190px;height:4px;background:#d9d9d9;border-radius:2px;"></div>
<svg style="position:absolute;left:359px;top:474px;" width="14" height="14" viewBox="0 0 14 14"><circle cx="7" cy="7" r="6" fill="#5fc3a0"/><circle cx="7" cy="7" r="2" fill="#4a9f84"/></svg>
<div style="left:377px;top:473px;width:94px;height:16px;background:#2a2a2a;border-radius:2px;"></div>
<span class="t" style="left:382px;top:475px;color:#777;font-size:11px;">%</span>
<span class="t" style="left:394px;top:475px;color:#e6e6e6;font-size:12px;">100.0</span>
<div style="left:177px;top:495px;width:16px;height:17px;background:#2a2a2a;border-radius:3px;"></div>
<svg style="position:absolute;left:178px;top:497px;" width="14" height="13" viewBox="0 0 14 13"><path d="M2.5 7 L5.5 10.5 L12 2.5" fill="none" stroke="#2ecc71" stroke-width="2"/></svg>
<div style="left:177px;top:517px;width:93px;height:16px;background:#2a2a2a;border-radius:2px;"></div>
<span class="t" style="left:182px;top:519px;color:#777;font-size:11px;">#</span>
<span class="t" style="left:194px;top:519px;color:#e6e6e6;font-size:12px;">0.0</span>
<div style="left:177px;top:539px;width:16px;height:17px;background:#2a2a2a;border-radius:3px;"></div>
<div style="left:177px;top:561px;width:93px;height:16px;background:#2a2a2a;border-radius:2px;"></div>
<svg style="position:absolute;left:182px;top:563px;" width="12" height="12" viewBox="0 0 12 12"><path d="M1 2 H10 M1 5 H8 M1 8 H10 M1 11 H8" stroke="#999" stroke-width="1"/></svg>
<span class="t" style="left:195px;top:563px;color:#8a8a8a;font-size:12px;">0</span>
<div style="left:273px;top:561px;width:17px;height:17px;background:#2b2b2b;background:#2b2b2b;border:1px solid #1f1f1f;border-radius:4px;box-shadow:inset 0 1px 0 #505050;"></div>
<svg style="position:absolute;left:273px;top:561px;" width="17" height="17" viewBox="0 0 17 17"><path d="M8.5 3.5 V13.5 M3.5 8.5 H13.5" stroke="#eee" stroke-width="1.8"/></svg>
<div style="left:398px;top:561px;width:15px;height:16px;background:#2b2b2b;background:#2b2b2b;border:1px solid #1c1c1c;border-radius:4px;box-shadow:inset 0 1px 0 #4a4a4a;"></div>
<svg style="position:absolute;left:398px;top:561px;" width="15" height="16" viewBox="0 0 15 16"><path d="M3.5 3 V12 H12.5" fill="none" stroke="#bbb" stroke-width="1.3"/><path d="M1.5 4.5 L3.5 2 L5.5 4.5 M11 10 L13.5 12 L11 14" fill="none" stroke="#6cbf78" stroke-width="1.3"/><path d="M5 10.5 L10.5 5" stroke="#bbb" stroke-width="1" stroke-dasharray="1.5 1"/><path d="M8 4.5 H11 V7.5" fill="none" stroke="#6cbf78" stroke-width="1.3"/></svg>
<div style="left:417px;top:561px;width:15px;height:16px;background:#2b2b2b;background:#2b2b2b;border:1px solid #1c1c1c;border-radius:4px;box-shadow:inset 0 1px 0 #4a4a4a;"></div>
<svg style="position:absolute;left:417px;top:561px;" width="15" height="16" viewBox="0 0 15 16"><path d="M1.5 7 C2 1.5 7 1.5 7.5 7 S12.5 13 13 7.5" fill="none" stroke="#6cbf78" stroke-width="1.2"/><rect x="0.5" y="5.5" width="3" height="3" fill="#ddd"/><rect x="6" y="6" width="3" height="3" fill="#ddd"/><rect x="11.5" y="6.5" width="3" height="3" fill="#ddd"/></svg>
<div style="left:435px;top:561px;width:15px;height:16px;background:#2b2b2b;background:#2b2b2b;border:1px solid #1c1c1c;border-radius:4px;box-shadow:inset 0 1px 0 #4a4a4a;"></div>
<svg style="position:absolute;left:435px;top:561px;" width="15" height="16" viewBox="0 0 15 16"><path d="M2.5 2 L13.5 4 L14 10 L2.5 13.5Z" fill="none" stroke="#6cbf78" stroke-width="1.3"/><path d="M4.5 5 L10.5 7.5 L4.5 10.5Z" fill="none" stroke="#888" stroke-width="1.2"/></svg>
<div style="left:452px;top:558px;width:1px;height:22px;background:#5a5a5a;"></div>
<div style="left:455px;top:561px;width:16px;height:16px;background:#2b2b2b;background:#2b2b2b;border:1px solid #1c1c1c;border-radius:4px;box-shadow:inset 0 1px 0 #4a4a4a;"></div>
<svg style="position:absolute;left:455px;top:561px;" width="16" height="16" viewBox="0 0 16 16"><rect x="2.5" y="3" width="11" height="2.2" fill="#9be39b"/><rect x="2.5" y="7" width="11" height="2" fill="#ddd"/><rect x="2.5" y="10.5" width="11" height="2" fill="#8a8a8a"/></svg>
<div style="left:177px;top:583px;width:93px;height:16px;background:#2a2a2a;border-radius:2px;"></div>
<svg style="position:absolute;left:182px;top:585px;" width="12" height="12" viewBox="0 0 12 12"><path d="M1 2 H10 M1 5 H8 M1 8 H10 M1 11 H8" stroke="#999" stroke-width="1"/></svg>
<span class="t" style="left:195px;top:585px;color:#e6c46a;font-size:12px;">1</span>
<svg style="position:absolute;left:250px;top:586px;" width="8" height="10" viewBox="0 0 8 10"><path d="M7 1 V9 L2 5Z" fill="#e0c060"/></svg>
<svg style="position:absolute;left:260px;top:586px;" width="8" height="10" viewBox="0 0 8 10"><path d="M1 1 V9 L6 5Z" fill="#777"/></svg>
<div style="left:273px;top:583px;width:17px;height:17px;background:#2b2b2b;background:#2b2b2b;border:1px solid #1f1f1f;border-radius:4px;box-shadow:inset 0 1px 0 #505050;"></div>
<svg style="position:absolute;left:273px;top:583px;" width="17" height="17" viewBox="0 0 17 17"><path d="M8.5 3.5 V13.5 M3.5 8.5 H13.5" stroke="#eee" stroke-width="1.8"/></svg>
<div style="left:455px;top:583px;width:16px;height:16px;background:#2b2b2b;background:#2b2b2b;border:1px solid #1c1c1c;border-radius:4px;box-shadow:inset 0 1px 0 #4a4a4a;"></div>
<svg style="position:absolute;left:455px;top:583px;" width="16" height="16" viewBox="0 0 16 16"><defs><radialGradient id="bg1"><stop offset="0" stop-color="#f4b0b8"/><stop offset="0.5" stop-color="#b07080"/><stop offset="1" stop-color="#2a2020"/></radialGradient></defs><rect x="2.5" y="2.5" width="11" height="11" fill="url(#bg1)" stroke="#ddd" stroke-width="1.1"/></svg>
<div style="left:9px;top:602px;width:121px;height:25px;border:3px solid #c3ea2b;"></div>
<div style="left:177px;top:605px;width:194px;height:115px;background:#2a2a2a;box-shadow:2px 3px 4px rgba(0,0,0,0.5);"></div>
<span class="t" style="left:178px;top:611px;color:#e6e6e6;font-size:12px;">Custom...</span>
<div style="left:177px;top:627px;width:194px;height:23px;background:#6a6a6a;"></div>
<div style="left:174px;top:625px;width:199px;height:29px;border:3px solid #c3ea2b;"></div>
<span class="t" style="left:178px;top:633px;color:#ececec;font-size:12px;">Text (Lines)</span>
<span class="t" style="left:178px;top:657px;color:#e6e6e6;font-size:12px;">Text (Words)</span>
<span class="t" style="left:178px;top:680px;color:#e6e6e6;font-size:12px;">Text (Characters)</span>
<span class="t" style="left:178px;top:702px;color:#e6e6e6;font-size:12px;">All</span>
<div style="left:476px;top:312px;width:10px;height:710px;background:#555;border-radius:5px;"></div>
<div style="left:488px;top:85px;width:6px;height:941px;background:#121212;"></div>
<div style="left:524px;top:85px;width:6px;height:495px;background:#121212;"></div>
<div style="left:1587px;top:85px;width:6px;height:495px;background:#121212;"></div>
<div style="left:957px;top:49px;width:6px;height:30px;background:#121212;"></div>
<div style="left:511px;top:40px;width:8px;height:1px;background:#d6d6d6;"></div>
<div style="left:494px;top:85px;width:30px;height:495px;background:#474747;"></div>
<div style="left:494px;top:85px;width:30px;height:10px;background:#3a3a3a;"></div>
<div style="left:530px;top:85px;width:1057px;height:22px;background:#1c1c1c;"></div>
<div style="left:530px;top:85px;width:87px;height:22px;background:#474747;border-radius:4px 4px 0 0;"></div>
<span class="t" style="left:535px;top:90px;color:#e0e0e0;font-size:12px;">Composition 4</span>
<div style="left:530px;top:107px;width:1057px;height:451px;background:#000;"></div>
<div style="left:694px;top:127px;width:729px;height:410px;background:#00aeff;"></div>
<div style="left:530px;top:558px;width:1057px;height:22px;background:#474747;"></div>
<div style="left:495px;top:96px;width:28px;height:28px;background:#151515;border-radius:4px;"></div>
<div style="left:503px;top:89px;width:2px;height:2px;background:#8a8a8a;"></div>
<div style="left:508px;top:89px;width:2px;height:2px;background:#8a8a8a;"></div>
<div style="left:513px;top:89px;width:2px;height:2px;background:#8a8a8a;"></div>
<svg width="0" height="0" style="position:absolute"><defs><linearGradient id="tg" x1="0" y1="0" x2="0" y2="1"><stop offset="0" stop-color="#f4f4f4"/><stop offset="1" stop-color="#bdbdbd"/></linearGradient></defs></svg>
<svg style="position:absolute;left:499px;top:99px;" width="20" height="20" viewBox="0 0 20 20"><path d="M4 2 L15 11 L10 11.5 L12.5 16.5 L10 17.5 L7.5 12.5 L4 15.5Z" fill="none" stroke="#2ecc71" stroke-width="1.3"/></svg>
<svg style="position:absolute;left:499px;top:130px;" width="20" height="20" viewBox="0 0 20 20"><path d="M5 2 L17 11 L11 11.5 L5 18Z" fill="url(#tg)"/></svg>
<svg style="position:absolute;left:499px;top:160px;" width="20" height="20" viewBox="0 0 20 20"><path d="M4 3 L11 5 L16 12 L13 16 L6 11Z" fill="url(#tg)"/><path d="M6 5 L10 10" stroke="#555" stroke-width="1"/><rect x="12" y="13" width="5" height="3" transform="rotate(45 14 14)" fill="#ccc"/></svg>
<svg style="position:absolute;left:499px;top:190px;" width="20" height="20" viewBox="0 0 20 20"><path d="M3 17 L5 12 L14 3 L17 6 L8 15Z" fill="url(#tg)"/><path d="M3 17 L5 12 L8 15Z" fill="#999"/></svg>
<svg style="position:absolute;left:499px;top:220px;" width="20" height="20" viewBox="0 0 20 20"><rect x="5" y="3.5" width="6" height="1.2" fill="#ddd"/><path d="M1 6 H13 V14 L11.5 15.5 H1Z" fill="url(#tg)"/><circle cx="3.5" cy="8" r="1.1" fill="#333"/><path d="M13.5 10 L19 6.5 V15 L13.5 12Z" fill="url(#tg)"/></svg>
<svg style="position:absolute;left:499px;top:250px;" width="20" height="20" viewBox="0 0 20 20"><path d="M3 17 L17 3" stroke="#cfcfcf" stroke-width="1.2"/></svg>
<svg style="position:absolute;left:499px;top:280px;" width="20" height="20" viewBox="0 0 20 20"><path d="M2.5 3 H17.5 V6.5 H12 V18 H8 V6.5 H2.5Z" fill="url(#tg)"/></svg>
<svg style="position:absolute;left:499px;top:310px;" width="20" height="20" viewBox="0 0 20 20"><path d="M3 2 L10 7 L6.5 7.5 L3 11Z" fill="#ddd"/><path d="M11 3 H15 L17 17 H3 V13" fill="none" stroke="#ddd" stroke-width="1" stroke-dasharray="1.5 2.5"/></svg>
<svg style="position:absolute;left:499px;top:340px;" width="20" height="20" viewBox="0 0 20 20"><rect x="3" y="3" width="14" height="14" fill="url(#tg)"/></svg>
<svg style="position:absolute;left:499px;top:370px;" width="20" height="20" viewBox="0 0 20 20"><circle cx="10" cy="10" r="7.5" fill="url(#tg)"/></svg>
<svg style="position:absolute;left:499px;top:400px;" width="20" height="20" viewBox="0 0 20 20"><path d="M10 2.5 L18 8.5 L15 17.5 H5 L2 8.5Z" fill="url(#tg)"/></svg>
<svg style="position:absolute;left:499px;top:430px;" width="20" height="20" viewBox="0 0 20 20"><path d="M10 2 L12.2 7.6 L18 7.8 L13.5 11.5 L15.2 17.5 L10 14 L4.8 17.5 L6.5 11.5 L2 7.8 L7.8 7.6Z" fill="url(#tg)"/></svg>
<svg style="position:absolute;left:499px;top:460px;" width="20" height="20" viewBox="0 0 20 20"><path d="M16.5 9.5 A7 7 0 1 0 11.5 17" fill="none" stroke="url(#tg)" stroke-width="3.2"/></svg>
<svg style="position:absolute;left:499px;top:490px;" width="20" height="20" viewBox="0 0 20 20"><path d="M10 2 Q11 9 18 10 Q11 11 10 18 Q9 11 2 10 Q9 9 10 2Z" fill="url(#tg)"/></svg>
<svg style="position:absolute;left:499px;top:520px;" width="20" height="20" viewBox="0 0 20 20"><g fill="url(#tg)"><circle cx="10" cy="10" r="6"/><rect x="8.3" y="1.5" width="3.4" height="17"/><rect x="1.5" y="8.3" width="17" height="3.4"/><rect x="8.3" y="1.5" width="3.4" height="17" transform="rotate(45 10 10)"/><rect x="8.3" y="1.5" width="3.4" height="17" transform="rotate(-45 10 10)"/></g><circle cx="10" cy="10" r="2.8" fill="#474747"/></svg>
<svg style="position:absolute;left:499px;top:560px;" width="20" height="20" viewBox="0 0 20 20"><path d="M4 5 L9 10 L4 15 M10 5 L15 10 L10 15" fill="none" stroke="#999" stroke-width="1.2"/></svg>
<svg style="position:absolute;left:694px;top:127px;overflow:hidden" width="729" height="410" viewBox="0 0 729 410"><defs><filter id="gl" x="-30%" y="-30%" width="160%" height="160%"><feGaussianBlur stdDeviation="2.5"/></filter><filter id="sf" x="-10%" y="-10%" width="120%" height="120%"><feGaussianBlur stdDeviation="1.2"/></filter></defs><circle cx="465.8" cy="104.7" r="25.8" fill="#4ea4ff" opacity="0.6" filter="url(#gl)"/><circle cx="503.6" cy="95.0" r="29.6" fill="#ff4fc8" opacity="0.6" filter="url(#gl)"/><circle cx="530.5" cy="101.0" r="36.5" fill="#ffd24f" opacity="0.6" filter="url(#gl)"/><circle cx="530.9" cy="127.7" r="43.9" fill="#d87fd8" opacity="0.6" filter="url(#gl)"/><circle cx="424.5" cy="120.4" r="23.8" fill="#ffd24c" opacity="0.6" filter="url(#gl)"/><circle cx="383.8" cy="141.4" r="22.3" fill="#b6ea8c" opacity="0.6" filter="url(#gl)"/><circle cx="344.8" cy="165.0" r="22.6" fill="#4ea4ff" opacity="0.6" filter="url(#gl)"/><circle cx="308.2" cy="191.0" r="23.3" fill="#ff7050" opacity="0.6" filter="url(#gl)"/><circle cx="274.8" cy="219.9" r="25.4" fill="#4ea4ff" opacity="0.6" filter="url(#gl)"/><circle cx="485.2" cy="180.3" r="50.5" fill="#4169e1" opacity="0.6" filter="url(#gl)"/><circle cx="397.2" cy="243.1" r="52.6" fill="#d87fd8" opacity="0.6" filter="url(#gl)"/><circle cx="248.9" cy="249.2" r="28.7" fill="#52f5b5" opacity="0.6" filter="url(#gl)"/><circle cx="236.7" cy="276.3" r="34.7" fill="#52f5b5" opacity="0.6" filter="url(#gl)"/><circle cx="251.2" cy="292.8" r="41.0" fill="#ff7050" opacity="0.6" filter="url(#gl)"/><circle cx="306.2" cy="285.6" r="48.2" fill="#6b55ff" opacity="0.6" filter="url(#gl)"/><circle cx="465.8" cy="104.7" r="23.3" fill="#4ea4ff" fill-opacity="0.93" filter="url(#sf)"/><circle cx="503.6" cy="95.0" r="27.1" fill="#ff4fc8" fill-opacity="0.93" filter="url(#sf)"/><circle cx="530.5" cy="101.0" r="34.0" fill="#ffd24f" fill-opacity="0.93" filter="url(#sf)"/><circle cx="530.9" cy="127.7" r="41.4" fill="#d87fd8" fill-opacity="0.93" filter="url(#sf)"/><circle cx="424.5" cy="120.4" r="21.3" fill="#ffd24c" fill-opacity="0.93" filter="url(#sf)"/><circle cx="383.8" cy="141.4" r="19.8" fill="#b6ea8c" fill-opacity="0.93" filter="url(#sf)"/><circle cx="344.8" cy="165.0" r="20.1" fill="#4ea4ff" fill-opacity="0.93" filter="url(#sf)"/><circle cx="308.2" cy="191.0" r="20.8" fill="#ff7050" fill-opacity="0.93" filter="url(#sf)"/><circle cx="274.8" cy="219.9" r="22.9" fill="#4ea4ff" fill-opacity="0.93" filter="url(#sf)"/><circle cx="485.2" cy="180.3" r="48.0" fill="#4169e1" fill-opacity="0.93" filter="url(#sf)"/><circle cx="397.2" cy="243.1" r="50.1" fill="#d87fd8" fill-opacity="0.93" filter="url(#sf)"/><circle cx="248.9" cy="249.2" r="26.2" fill="#52f5b5" fill-opacity="0.93" filter="url(#sf)"/><circle cx="236.7" cy="276.3" r="32.2" fill="#52f5b5" fill-opacity="0.93" filter="url(#sf)"/><circle cx="251.2" cy="292.8" r="38.5" fill="#ff7050" fill-opacity="0.93" filter="url(#sf)"/><circle cx="306.2" cy="285.6" r="45.7" fill="#6b55ff" fill-opacity="0.93" filter="url(#sf)"/><circle cx="465.8" cy="104.7" r="23.8" fill="none" stroke="#18237a" stroke-width="1.8" stroke-opacity="0.9"/><circle cx="503.6" cy="95.0" r="27.6" fill="none" stroke="#7a2a5a" stroke-width="1.8" stroke-opacity="0.9"/><circle cx="530.5" cy="101.0" r="34.5" fill="none" stroke="#5a1a3a" stroke-width="1.8" stroke-opacity="0.9"/><circle cx="530.9" cy="127.7" r="41.9" fill="none" stroke="#2a5a3a" stroke-width="1.8" stroke-opacity="0.9"/><circle cx="424.5" cy="120.4" r="21.8" fill="none" stroke="#3a1a40" stroke-width="1.8" stroke-opacity="0.9"/><circle cx="383.8" cy="141.4" r="20.3" fill="none" stroke="#2a1a50" stroke-width="1.8" stroke-opacity="0.9"/><circle cx="344.8" cy="165.0" r="20.6" fill="none" stroke="#10207a" stroke-width="1.8" stroke-opacity="0.9"/><circle cx="308.2" cy="191.0" r="21.3" fill="none" stroke="#503a3a" stroke-width="1.8" stroke-opacity="0.9"/><circle cx="274.8" cy="219.9" r="23.4" fill="none" stroke="#10207a" stroke-width="1.8" stroke-opacity="0.9"/><circle cx="485.2" cy="180.3" r="48.5" fill="none" stroke="#1a2a60" stroke-width="1.8" stroke-opacity="0.9"/><circle cx="397.2" cy="243.1" r="50.6" fill="none" stroke="#4a2a5a" stroke-width="1.8" stroke-opacity="0.9"/><circle cx="248.9" cy="249.2" r="26.7" fill="none" stroke="#10206a" stroke-width="1.8" stroke-opacity="0.9"/><circle cx="236.7" cy="276.3" r="32.7" fill="none" stroke="#10207a" stroke-width="1.8" stroke-opacity="0.9"/><circle cx="251.2" cy="292.8" r="39.0" fill="none" stroke="#5a2a2a" stroke-width="1.8" stroke-opacity="0.9"/><circle cx="306.2" cy="285.6" r="46.2" fill="none" stroke="#1a2a70" stroke-width="1.8" stroke-opacity="0.9"/><text x="465.8" y="110.4" font-family="Liberation Sans" font-weight="bold" font-size="15.8" text-anchor="middle" fill="#4a2aa0">0</text><text x="503.6" y="100.8" font-family="Liberation Sans" font-weight="bold" font-size="15.8" text-anchor="middle" fill="#d02040">4</text><text x="530.5" y="109.3" font-family="Liberation Sans" font-size="22.7" text-anchor="middle" fill="#e0909a" stroke="#a05050" stroke-width="1.3">8</text><text x="530.9" y="137.8" font-family="Liberation Sans" font-size="27.6" text-anchor="middle" fill="#e27ac0" stroke="#a03a7a" stroke-width="1.3">12</text><text x="424.5" y="126.2" font-family="Liberation Sans" font-weight="bold" font-size="15.8" text-anchor="middle" fill="#c81010">11</text><text x="383.8" y="147.1" font-family="Liberation Sans" font-weight="bold" font-size="15.8" text-anchor="middle" fill="#8a2a3a">7</text><text x="344.8" y="170.8" font-family="Liberation Sans" font-weight="bold" font-size="15.8" text-anchor="middle" fill="#4a2a9a">3</text><text x="308.2" y="196.8" font-family="Liberation Sans" font-weight="bold" font-size="15.8" text-anchor="middle" fill="#c05a2a">14</text><text x="274.8" y="225.6" font-family="Liberation Sans" font-weight="bold" font-size="15.8" text-anchor="middle" fill="#5a2aa0">10</text><text x="485.2" y="191.9" font-family="Liberation Sans" font-size="31.9" text-anchor="middle" fill="#5a6ad0" stroke="#404890" stroke-width="1.3">1</text><text x="397.2" y="255.2" font-family="Liberation Sans" font-size="33.3" text-anchor="middle" fill="#f070b0" stroke="#c02a70" stroke-width="1.3">5</text><text x="248.9" y="254.9" font-family="Liberation Sans" font-weight="bold" font-size="15.8" text-anchor="middle" fill="#3a2a3a">6</text><text x="236.7" y="284.1" font-family="Liberation Sans" font-size="21.5" text-anchor="middle" fill="#e0704a" stroke="#9a4a2a" stroke-width="1.3">2</text><text x="251.2" y="302.2" font-family="Liberation Sans" font-size="25.7" text-anchor="middle" fill="#e08060" stroke="#a04a2a" stroke-width="1.3">13</text><text x="306.2" y="296.7" font-family="Liberation Sans" font-size="30.4" text-anchor="middle" fill="#a07af0" stroke="#7a50c0" stroke-width="1.3">9</text></svg>
<div style="left:871px;top:359px;width:7px;height:7px;background:#ffe680;"></div>
<span class="t" style="left:882px;top:357px;color:#111;font-size:12px;">Duplicator</span>
<span class="t" style="left:570px;top:461px;color:#f0f0f0;font-size:12px;letter-spacing:-0.197px">Hold S <span style="color:#5c5c5c;mix-blend-mode:difference">Direct Layer Selection</span></span>
<span class="t" style="left:570px;top:475px;color:#f0f0f0;font-size:12px;letter-spacing:-0.376px">Space <span style="color:#5c5c5c;mix-blend-mode:difference">Play/ Stop</span></span>
<span class="t" style="left:570px;top:489px;color:#f0f0f0;font-size:12px;letter-spacing:-0.433px">Space + click + drag <span style="color:#5c5c5c;mix-blend-mode:difference">Pan</span></span>
<span class="t" style="left:570px;top:503px;color:#f0f0f0;font-size:12px;letter-spacing:-0.116px">Alt + click + drag <span style="color:#5c5c5c;mix-blend-mode:difference">Move Pivot Point</span></span>
<span class="t" style="left:570px;top:517px;color:#f0f0f0;font-size:12px;letter-spacing:-0.320px">Shift <span style="color:#5c5c5c;mix-blend-mode:difference">Enable Snapping</span></span>
<span class="t" style="left:998px;top:537px;color:#f0f0f0;font-size:12px;">Viewport Quality: High</span>
<div style="left:535px;top:561px;width:78px;height:17px;background:#2a2a2a;border-radius:3px;"></div>
<span class="t" style="left:538px;top:563px;color:#e6e6e6;font-size:12px;">38%</span>
<svg style="position:absolute;left:598px;top:565px;" width="12" height="9" viewBox="0 0 12 9"><path d="M1.5 2 L6 6.5 L10.5 2" fill="none" stroke="#ccc" stroke-width="1.1"/></svg>
<div style="left:866px;top:560px;width:100px;height:19px;background:#2b2b2b;border:1px solid #1f1f1f;border-radius:4px;box-shadow:inset 0 1px 0 #505050;"></div>
<div style="left:886.0px;top:561px;width:1px;height:17px;background:#1f1f1f;"></div>
<div style="left:906.0px;top:561px;width:1px;height:17px;background:#1f1f1f;"></div>
<div style="left:926.0px;top:561px;width:1px;height:17px;background:#1f1f1f;"></div>
<div style="left:946.0px;top:561px;width:1px;height:17px;background:#1f1f1f;"></div>
<svg style="position:absolute;left:866.0px;top:560px;" width="20.0" height="19" viewBox="0 0 20.0 19"><rect x="6" y="5" width="1.8" height="9" fill="#dcdcdc"/><path d="M14 5 V14 L8 9.5Z" fill="#dcdcdc"/></svg>
<svg style="position:absolute;left:886.0px;top:560px;" width="20.0" height="19" viewBox="0 0 20.0 19"><path d="M10 5 V14 L4 9.5Z" fill="#dcdcdc"/><rect x="12" y="5" width="1.8" height="9" fill="#dcdcdc"/></svg>
<svg style="position:absolute;left:906.0px;top:560px;" width="20.0" height="19" viewBox="0 0 20.0 19"><path d="M7 5 V14 L14 9.5Z" fill="#dcdcdc"/></svg>
<svg style="position:absolute;left:926.0px;top:560px;" width="20.0" height="19" viewBox="0 0 20.0 19"><rect x="5.5" y="5" width="1.8" height="9" fill="#dcdcdc"/><path d="M9.5 5 V14 L15.5 9.5Z" fill="#dcdcdc"/></svg>
<svg style="position:absolute;left:946.0px;top:560px;" width="20.0" height="19" viewBox="0 0 20.0 19"><path d="M5.5 5 V14 L11.5 9.5Z" fill="#dcdcdc"/><rect x="12.5" y="5" width="1.8" height="9" fill="#dcdcdc"/></svg>
<div style="left:971px;top:560px;width:20px;height:19px;background:#2b2b2b;background:#2b2b2b;border:1px solid #1f1f1f;border-radius:4px;box-shadow:inset 0 1px 0 #505050;"></div>
<svg style="position:absolute;left:971px;top:560px;" width="20" height="19" viewBox="0 0 20 19"><path d="M9 6 H4 V14 H16 V10" fill="none" stroke="#dcdcdc" stroke-width="1.3"/><path d="M9 10 C9 7 11 6 14 6" fill="none" stroke="#dcdcdc" stroke-width="1.3"/><path d="M13 3.5 L16 6 L13 8.5Z" fill="#dcdcdc"/></svg>
<div style="left:1232px;top:560px;width:37px;height:19px;background:#2b2b2b;border-radius:4px;"></div>
<svg style="position:absolute;left:1233px;top:562px;" width="16" height="15" viewBox="0 0 16 15"><path d="M1 7 L5 3 H14 V11 H5Z" fill="#cfcfcf"/><circle cx="5.5" cy="7" r="1.6" fill="#2b2b2b"/></svg>
<span class="t" style="left:1257px;top:563px;color:#6a9fd8;font-size:12px;">0</span>
<div style="left:1272px;top:560px;width:32px;height:19px;background:#2b2b2b;border:1px solid #1f1f1f;border-radius:4px;box-shadow:inset 0 1px 0 #505050;"></div>
<div style="left:1288.0px;top:561px;width:1px;height:17px;background:#1f1f1f;"></div>
<svg style="position:absolute;left:1272.0px;top:560px;" width="16.0" height="19" viewBox="0 0 16.0 19"><path d="M2 7 H5 L9 3.5 V15.5 L5 12 H2Z" fill="#2ecc71"/><path d="M11 6 A4 4 0 0 1 11 13 M13 4 A7 7 0 0 1 13 15" fill="none" stroke="#2ecc71" stroke-width="1.3"/></svg>
<svg style="position:absolute;left:1288.0px;top:560px;" width="16.0" height="19" viewBox="0 0 16.0 19"><path d="M5 6 L11 9.5 L5 13Z" fill="none" stroke="#999" stroke-width="1"/></svg>
<div style="left:1307px;top:560px;width:32px;height:19px;background:#2b2b2b;border:1px solid #1f1f1f;border-radius:4px;box-shadow:inset 0 1px 0 #505050;"></div>
<div style="left:1323.0px;top:561px;width:1px;height:17px;background:#1f1f1f;"></div>
<svg style="position:absolute;left:1307.0px;top:560px;" width="16.0" height="19" viewBox="0 0 16.0 19"><path d="M4 12 A5.5 5.5 0 1 1 13.5 13" fill="none" stroke="#ccc" stroke-width="2.2"/></svg>
<svg style="position:absolute;left:1323.0px;top:560px;" width="16.0" height="19" viewBox="0 0 16.0 19"><path d="M5 6 L11 9.5 L5 13Z" fill="none" stroke="#999" stroke-width="1"/></svg>
<div style="left:1342px;top:560px;width:32px;height:19px;background:#2b2b2b;border:1px solid #1f1f1f;border-radius:4px;box-shadow:inset 0 1px 0 #505050;"></div>
<div style="left:1358.0px;top:561px;width:1px;height:17px;background:#1f1f1f;"></div>
<svg style="position:absolute;left:1342.0px;top:560px;" width="16.0" height="19" viewBox="0 0 16.0 19"><path d="M6 2 V17 M11 2 V17 M2 6.5 H15 M2 12 H15" stroke="#ccc" stroke-width="1.1"/></svg>
<svg style="position:absolute;left:1358.0px;top:560px;" width="16.0" height="19" viewBox="0 0 16.0 19"><path d="M5 6 L11 9.5 L5 13Z" fill="none" stroke="#999" stroke-width="1"/></svg>
<div style="left:1377px;top:560px;width:20px;height:19px;background:#2b2b2b;background:#2b2b2b;border:1px solid #1f1f1f;border-radius:4px;box-shadow:inset 0 1px 0 #505050;"></div>
<svg style="position:absolute;left:1377px;top:560px;" width="20" height="19" viewBox="0 0 20 19"><rect x="3" y="4" width="3" height="3" fill="#2ecc71"/><rect x="3" y="9" width="3" height="6" fill="#2ecc71"/><rect x="8" y="4" width="9" height="6" fill="none" stroke="#2ecc71" stroke-width="1.3"/><rect x="8" y="12" width="9" height="3" fill="#2ecc71"/></svg>
<div style="left:1400px;top:560px;width:20px;height:19px;background:#2b2b2b;background:#2b2b2b;border:1px solid #1f1f1f;border-radius:4px;box-shadow:inset 0 1px 0 #505050;"></div>
<svg style="position:absolute;left:1400px;top:560px;" width="20" height="19" viewBox="0 0 20 19"><path d="M3 5 L7 9.5 L3 14 M8 5 L12 9.5 L8 14 M13 5 L17 9.5 L13 14" fill="none" stroke="#ccc" stroke-width="1.8"/></svg>
<div style="left:1423px;top:560px;width:32px;height:19px;background:#2b2b2b;border:1px solid #1f1f1f;border-radius:4px;box-shadow:inset 0 1px 0 #505050;"></div>
<div style="left:1439.0px;top:561px;width:1px;height:17px;background:#1f1f1f;"></div>
<svg style="position:absolute;left:1423.0px;top:560px;" width="16.0" height="19" viewBox="0 0 16.0 19"><rect x="2.5" y="4" width="12" height="10" fill="none" stroke="#ccc" stroke-width="1.2"/><rect x="2" y="13" width="13" height="2" fill="#ccc"/></svg>
<svg style="position:absolute;left:1439.0px;top:560px;" width="16.0" height="19" viewBox="0 0 16.0 19"><path d="M5 6 L11 9.5 L5 13Z" fill="none" stroke="#999" stroke-width="1"/></svg>
<div style="left:1458px;top:560px;width:32px;height:19px;background:#2b2b2b;border:1px solid #1f1f1f;border-radius:4px;box-shadow:inset 0 1px 0 #505050;"></div>
<div style="left:1474.0px;top:561px;width:1px;height:17px;background:#1f1f1f;"></div>
<svg style="position:absolute;left:1458.0px;top:560px;" width="16.0" height="19" viewBox="0 0 16.0 19"><rect x="2" y="3" width="8" height="6" fill="none" stroke="#ccc"/><path d="M4 10 V11 H12 V5 H11 M6 12 V13 H14 V7 H13" fill="none" stroke="#aaa"/></svg>
<svg style="position:absolute;left:1474.0px;top:560px;" width="16.0" height="19" viewBox="0 0 16.0 19"><path d="M5 6 L11 9.5 L5 13Z" fill="none" stroke="#999" stroke-width="1"/></svg>
<div style="left:1493px;top:560px;width:32px;height:19px;background:#2b2b2b;border:1px solid #1f1f1f;border-radius:4px;box-shadow:inset 0 1px 0 #505050;"></div>
<div style="left:1509.0px;top:561px;width:1px;height:17px;background:#1f1f1f;"></div>
<svg style="position:absolute;left:1493.0px;top:560px;" width="16.0" height="19" viewBox="0 0 16.0 19"><rect x="2" y="2.5" width="8" height="8" fill="#aaa"/><rect x="6" y="7" width="8" height="8" fill="#2b2b2b" stroke="#ddd" stroke-width="1.1"/></svg>
<svg style="position:absolute;left:1509.0px;top:560px;" width="16.0" height="19" viewBox="0 0 16.0 19"><path d="M5 6 L11 9.5 L5 13Z" fill="none" stroke="#999" stroke-width="1"/></svg>
<div style="left:1528px;top:560px;width:32px;height:19px;background:#2b2b2b;border:1px solid #1f1f1f;border-radius:4px;box-shadow:inset 0 1px 0 #505050;"></div>
<div style="left:1544.0px;top:561px;width:1px;height:17px;background:#1f1f1f;"></div>
<svg style="position:absolute;left:1528.0px;top:560px;" width="16.0" height="19" viewBox="0 0 16.0 19"><g fill="#2ecc71"><rect x="3" y="3" width="3" height="3"/><rect x="3" y="9" width="3" height="3"/><rect x="6" y="6" width="3" height="3"/><rect x="6" y="12" width="3" height="3"/><rect x="9" y="3" width="3" height="3"/><rect x="9" y="9" width="3" height="3"/><rect x="12" y="6" width="3" height="3"/><rect x="12" y="12" width="3" height="3"/></g></svg>
<svg style="position:absolute;left:1544.0px;top:560px;" width="16.0" height="19" viewBox="0 0 16.0 19"><path d="M5 6 L11 9.5 L5 13Z" fill="none" stroke="#999" stroke-width="1"/></svg>
<div style="left:1563px;top:560px;width:20px;height:19px;background:#2b2b2b;background:#2b2b2b;border:1px solid #1f1f1f;border-radius:4px;box-shadow:inset 0 1px 0 #505050;"></div>
<svg style="position:absolute;left:1563px;top:560px;" width="20" height="19" viewBox="0 0 20 19"><g fill="#ddd"><circle cx="10" cy="9.5" r="4.5"/><rect x="8.8" y="3" width="2.4" height="13"/><rect x="3.5" y="8.3" width="13" height="2.4"/><rect x="8.8" y="3" width="2.4" height="13" transform="rotate(45 10 9.5)"/><rect x="8.8" y="3" width="2.4" height="13" transform="rotate(-45 10 9.5)"/></g><circle cx="10" cy="9.5" r="2" fill="#2b2b2b"/></svg>
<div style="left:1593px;top:85px;width:321px;height:22px;background:#1c1c1c;"></div>
<div style="left:1593px;top:85px;width:40px;height:22px;background:#474747;border-radius:3px 3px 0 0;"></div>
<span class="t" style="left:1598px;top:90px;color:#e0e0e0;font-size:12px;">Color</span>
<span class="t" style="left:1639px;top:90px;color:#e0e0e0;font-size:12px;">Add Layers</span>
<div style="left:1593px;top:107px;width:321px;height:377px;background:#474747;"></div>
<div style="left:1593px;top:484px;width:321px;height:6px;background:#121212;"></div>
<div style="left:1593px;top:490px;width:321px;height:22px;background:#1c1c1c;"></div>
<div style="left:1593px;top:490px;width:40px;height:22px;background:#474747;border-radius:3px 3px 0 0;"></div>
<span class="t" style="left:1598px;top:495px;color:#e0e0e0;font-size:12px;">Align</span>
<div style="left:1593px;top:512px;width:321px;height:68px;background:#474747;"></div>
<div style="left:1593px;top:107px;width:307px;height:377px;overflow:hidden;background:#474747"><div style="left:53px;top:-47px;width:200px;height:200px;border-radius:50%;background:conic-gradient(from 90deg, #ff0000, #ff00ff, #0000ff, #00ffff, #00ff00, #ffff00, #ff0000);"></div><div style="left:77px;top:-23px;width:152px;height:152px;border-radius:50%;background:#474747;"></div></div>
<div style="left:1702px;top:116px;width:90px;height:90px;background:linear-gradient(to bottom,#ffffff,#3a10ff);"></div>
<div style="left:1702px;top:116px;width:90px;height:90px;background:linear-gradient(to right,#000 0%,rgba(0,0,0,0.6) 35%,rgba(0,0,0,0) 100%);"></div>
<svg style="position:absolute;left:1703px;top:231px;" width="16" height="16" viewBox="0 0 16 16"><circle cx="8" cy="8" r="6" fill="none" stroke="#fff" stroke-width="1.2"/></svg>
<svg style="position:absolute;left:1784px;top:168px;" width="16" height="16" viewBox="0 0 16 16"><circle cx="8" cy="8" r="6" fill="none" stroke="#fff" stroke-width="1.2"/></svg>
<div style="left:1600px;top:273px;width:22px;height:22px;background:#6755ff;border-radius:3px;"></div>
<span class="t" style="left:1625px;top:278px;color:#e6e6e6;font-size:12px;">Medium Slateblue</span>
<div style="left:1871px;top:273px;width:22px;height:22px;background:#2b2b2b;background:#2b2b2b;border:1px solid #1f1f1f;border-radius:4px;box-shadow:inset 0 1px 0 #505050;"></div>
<svg style="position:absolute;left:1874px;top:276px;" width="16" height="16" viewBox="0 0 16 16"><path d="M3 13 L10 6" stroke="#bbb" stroke-width="1.5"/><path d="M8.5 4.5 L11.5 7.5" stroke="#ccc" stroke-width="2.6"/><circle cx="12" cy="4" r="2.2" fill="#ccc"/></svg>
<div style="left:1600px;top:300px;width:50px;height:18px;background:#3d3d3d;border:1px solid #333;border-radius:3px;"></div>
<span class="t" style="left:1603px;top:303px;color:#e6e6e6;font-size:12px;">Hex</span>
<svg style="position:absolute;left:1636px;top:305px;" width="10" height="8" viewBox="0 0 10 8"><path d="M1 2 L5 6 L9 2" fill="none" stroke="#bbb" stroke-width="1"/></svg>
<div style="left:1653px;top:298px;width:240px;height:22px;background:#2a2a2a;border-radius:3px;"></div>
<span class="t" style="left:1658px;top:303px;color:#666;font-size:11px;">#</span>
<span class="t" style="left:1670px;top:303px;color:#e6e6e6;font-size:12px;">6755ff</span>
<div style="left:1600px;top:330px;width:234px;height:4px;background:#dcdcdc;border-radius:2px;"></div>
<svg style="position:absolute;left:1827px;top:325px;" width="14" height="14" viewBox="0 0 14 14"><circle cx="7" cy="7" r="6" fill="#5fc3a0"/><circle cx="7" cy="7" r="2" fill="#4a9f84"/></svg>
<div style="left:1849px;top:324px;width:44px;height:17px;background:#2a2a2a;border-radius:3px;"></div>
<span class="t" style="left:1853px;top:326px;color:#666;font-size:12px;">A</span>
<span class="t" style="left:1866px;top:326px;color:#e6e6e6;font-size:12px;">255</span>
<div style="left:1597px;top:346px;width:299px;height:22px;background:#232323;"></div>
<div style="left:1599px;top:348px;width:148px;height:20px;background:#474747;border-radius:4px 4px 0 0;"></div>
<span class="t" style="left:1648px;top:352px;color:#e6e6e6;font-size:12px;">Swatches</span>
<span class="t" style="left:1794px;top:352px;color:#cfcfcf;font-size:12px;">Generator</span>
<div style="left:1598px;top:371px;width:257px;height:18px;background:#5a5a5a;border-radius:4px;"></div>
<div style="left:1600px;top:372px;width:61px;height:16px;background:#2a2a2a;border-radius:3px;"></div>
<svg style="position:absolute;left:1605px;top:374px;" width="12" height="12" viewBox="0 0 12 12"><path d="M2 2 V11 M5 2 V11 M8 2 L11 11" stroke="#2ecc71" stroke-width="1.6"/></svg>
<span class="t" style="left:1621px;top:374px;color:#eeeeee;font-size:12px;">Library</span>
<svg style="position:absolute;left:1670px;top:374px;" width="13" height="12" viewBox="0 0 13 12"><rect x="1.5" y="3" width="10" height="8" fill="none" stroke="#ccc" stroke-width="1.2"/><rect x="1.5" y="1.5" width="4" height="2" fill="#ccc"/><path d="M3.5 6 H9.5 M3.5 8.5 H9.5" stroke="#ccc"/></svg>
<span class="t" style="left:1686px;top:374px;color:#eeeeee;font-size:12px;">Project</span>
<svg style="position:absolute;left:1736px;top:373px;" width="11" height="13" viewBox="0 0 11 13"><path d="M1.5 1.5 H6.5 L9.5 4.5 V11.5 H1.5Z" fill="none" stroke="#ccc" stroke-width="1.1"/></svg>
<span class="t" style="left:1752px;top:374px;color:#eeeeee;font-size:12px;">Scene</span>
<svg style="position:absolute;left:1800px;top:373px;" width="13" height="13" viewBox="0 0 13 13"><path d="M6 1.5 H11.5 V7 L7 11.5 H6 A4.5 4.5 0 0 1 6 1.5Z" fill="none" stroke="#ccc" stroke-width="1.1"/></svg>
<span class="t" style="left:1816px;top:374px;color:#eeeeee;font-size:12px;">Labels</span>
<div style="left:1858px;top:371px;width:37px;height:18px;background:#5a5a5a;border-radius:4px;"></div>
<div style="left:1859px;top:372px;width:17px;height:16px;background:#2a2a2a;border-radius:3px;"></div>
<svg style="position:absolute;left:1862px;top:375px;" width="11" height="11" viewBox="0 0 11 11"><rect x="1" y="1" width="3.5" height="3.5" fill="#2ecc71"/><rect x="6.5" y="1" width="3.5" height="3.5" fill="#2ecc71"/><rect x="1" y="6.5" width="3.5" height="3.5" fill="#2ecc71"/><rect x="6.5" y="6.5" width="3.5" height="3.5" fill="#2ecc71"/></svg>
<svg style="position:absolute;left:1879px;top:374px;" width="14" height="12" viewBox="0 0 14 12"><path d="M1 2 H13 M1 6 H13 M1 10 H13" stroke="#ddd" stroke-width="1.2"/></svg>
<div style="left:1598px;top:393px;width:275px;height:17px;background:#4d4d4d;border:1px solid #3a3a3a;border-radius:3px;"></div>
<span class="t" style="left:1601px;top:395px;color:#eeeeee;font-size:12px;">new</span>
<svg style="position:absolute;left:1859px;top:397px;" width="12" height="9" viewBox="0 0 12 9"><path d="M1.5 2 L6 6.5 L10.5 2" fill="none" stroke="#ccc" stroke-width="1.1"/></svg>
<div style="left:1880px;top:400px;width:2px;height:2px;background:#ddd;"></div>
<div style="left:1885px;top:400px;width:2px;height:2px;background:#ddd;"></div>
<div style="left:1890px;top:400px;width:2px;height:2px;background:#ddd;"></div>
<div style="left:1598px;top:410px;width:297px;height:74px;background:#262626;"></div>
<div style="left:1600px;top:412px;width:18px;height:18px;background:#9250ff;border-radius:3px;"></div>
<div style="left:1622px;top:412px;width:18px;height:18px;background:#4aa0ff;border-radius:3px;"></div>
<div style="left:1644px;top:412px;width:18px;height:18px;background:#ff7050;border-radius:3px;"></div>
<div style="left:1666px;top:412px;width:18px;height:18px;background:#52f5b5;border-radius:3px;"></div>
<div style="left:1688px;top:412px;width:18px;height:18px;background:#ff5060;border-radius:3px;"></div>
<div style="left:1710px;top:412px;width:18px;height:18px;background:#ff50c0;border-radius:3px;"></div>
<div style="left:1732px;top:412px;width:18px;height:18px;background:#ffd24f;border-radius:3px;"></div>
<div style="left:1754px;top:412px;width:18px;height:18px;background:#4169e1;border-radius:3px;"></div>
<div style="left:1776px;top:412px;width:18px;height:18px;background:#5ae0d0;border-radius:3px;"></div>
<div style="left:1798px;top:412px;width:18px;height:18px;background:#d87fd8;border-radius:3px;"></div>
<div style="left:1820px;top:412px;width:18px;height:18px;background:#b0ea8a;border-radius:3px;"></div>
<div style="left:1842px;top:412px;width:18px;height:18px;background:#6b55ff;border-radius:3px;"></div>
<div style="left:1899px;top:107px;width:15px;height:377px;background:#3a3a3a;"></div>
<div style="left:1902px;top:153px;width:10px;height:303px;background:#555;border-radius:5px;"></div>
<span class="t" style="left:1601px;top:525px;color:#e6e6e6;font-size:12px;">Alignment</span>
<span class="t" style="left:1601px;top:553px;color:#e6e6e6;font-size:12px;">Distribution</span>
<div style="left:1790px;top:522px;width:54px;height:18px;background:#2b2b2b;border:1px solid #1f1f1f;border-radius:4px;box-shadow:inset 0 1px 0 #505050;"></div>
<div style="left:1808.0px;top:523px;width:1px;height:16px;background:#1f1f1f;"></div>
<div style="left:1826.0px;top:523px;width:1px;height:16px;background:#1f1f1f;"></div>
<svg style="position:absolute;left:1790.0px;top:522px;" width="18.0" height="18" viewBox="0 0 18.0 18"><path d="M3 2 V16" stroke="#dcdcdc"/><rect x="5" y="5.5" width="6" height="2" fill="#dcdcdc"/><rect x="5" y="10" width="10" height="2" fill="#dcdcdc"/></svg>
<svg style="position:absolute;left:1808.0px;top:522px;" width="18.0" height="18" viewBox="0 0 18.0 18"><path d="M9 2 V16" stroke="#dcdcdc"/><rect x="5.5" y="5.5" width="7" height="2" fill="#dcdcdc"/><rect x="3" y="10" width="12" height="2" fill="#dcdcdc"/></svg>
<svg style="position:absolute;left:1826.0px;top:522px;" width="18.0" height="18" viewBox="0 0 18.0 18"><path d="M15 2 V16" stroke="#dcdcdc"/><rect x="7" y="5.5" width="6" height="2" fill="#dcdcdc"/><rect x="3" y="10" width="10" height="2" fill="#dcdcdc"/></svg>
<div style="left:1852px;top:522px;width:54px;height:18px;background:#2b2b2b;border:1px solid #1f1f1f;border-radius:4px;box-shadow:inset 0 1px 0 #505050;"></div>
<div style="left:1870.0px;top:523px;width:1px;height:16px;background:#1f1f1f;"></div>
<div style="left:1888.0px;top:523px;width:1px;height:16px;background:#1f1f1f;"></div>
<svg style="position:absolute;left:1852.0px;top:522px;" width="18.0" height="18" viewBox="0 0 18.0 18"><path d="M3 2.5 H15" stroke="#dcdcdc"/><rect x="5" y="4" width="2" height="10" fill="#dcdcdc"/><rect x="10" y="4" width="2" height="6" fill="#dcdcdc"/></svg>
<svg style="position:absolute;left:1870.0px;top:522px;" width="18.0" height="18" viewBox="0 0 18.0 18"><path d="M2 9 H16" stroke="#dcdcdc"/><rect x="5" y="3" width="2" height="12" fill="#dcdcdc"/><rect x="10.5" y="5" width="2" height="8" fill="#dcdcdc"/></svg>
<svg style="position:absolute;left:1888.0px;top:522px;" width="18.0" height="18" viewBox="0 0 18.0 18"><path d="M3 15.5 H15" stroke="#dcdcdc"/><rect x="5" y="8" width="2" height="6" fill="#dcdcdc"/><rect x="10" y="3" width="2" height="11" fill="#dcdcdc"/></svg>
<div style="left:1790px;top:550px;width:54px;height:18px;background:#2b2b2b;border:1px solid #1f1f1f;border-radius:4px;box-shadow:inset 0 1px 0 #505050;"></div>
<div style="left:1808.0px;top:551px;width:1px;height:16px;background:#1f1f1f;"></div>
<div style="left:1826.0px;top:551px;width:1px;height:16px;background:#1f1f1f;"></div>
<svg style="position:absolute;left:1790.0px;top:550px;" width="18.0" height="18" viewBox="0 0 18.0 18"><path d="M3 2 V16 M15 2 V16" stroke="#dcdcdc"/><rect x="8" y="5" width="2" height="8" fill="#dcdcdc"/></svg>
<svg style="position:absolute;left:1808.0px;top:550px;" width="18.0" height="18" viewBox="0 0 18.0 18"><path d="M2 3 H16 M2 15 H16" stroke="#dcdcdc"/><rect x="5" y="8" width="8" height="2" fill="#dcdcdc"/></svg>
<svg style="position:absolute;left:1826.0px;top:550px;" width="18.0" height="18" viewBox="0 0 18.0 18"><path d="M2 5 V2 H5 M13 2 H16 V5 M2 13 V16 H5 M16 13 V16 H13" fill="none" stroke="#dcdcdc"/><rect x="6" y="9" width="2" height="3" fill="#dcdcdc"/><rect x="10" y="6" width="2" height="3" fill="#dcdcdc"/></svg>
<div style="left:494px;top:580px;width:1420px;height:6px;background:#121212;"></div>
<div style="left:494px;top:586px;width:1420px;height:22px;background:#1c1c1c;"></div>
<div style="left:494px;top:608px;width:1420px;height:22px;background:#2a2a2a;"></div>
<div style="left:494px;top:630px;width:465px;height:22px;background:#474747;"></div>
<div style="left:494px;top:652px;width:465px;height:20px;background:#474747;"></div>
<div style="left:494px;top:672px;width:465px;height:286px;background:#3a3a3a;"></div>
<div style="left:963px;top:630px;width:951px;height:332px;background:#1c1c1c;"></div>
<div style="left:494px;top:958px;width:1420px;height:18px;background:#2a2a2a;"></div>
<div style="left:494px;top:976px;width:1420px;height:22px;background:#474747;"></div>
<div style="left:494px;top:998px;width:1420px;height:6px;background:#121212;"></div>
<div style="left:494px;top:1004px;width:1420px;height:22px;background:#3a3a3a;"></div>
<div style="left:494px;top:586px;width:89px;height:22px;background:#474747;border-radius:4px 4px 0 0;"></div>
<span class="t" style="left:499px;top:591px;color:#e6e6e6;font-size:12px;">Scene Window</span>
<div style="left:584px;top:586px;width:100px;height:22px;background:#2a2a2a;border-radius:3px 3px 0 0;"></div>
<span class="t" style="left:589px;top:591px;color:#e6e6e6;font-size:12px;">JavaScript Editor</span>
<div style="left:685px;top:586px;width:112px;height:22px;background:#2a2a2a;border-radius:3px 3px 0 0;"></div>
<span class="t" style="left:690px;top:591px;color:#e6e6e6;font-size:12px;">Dependency Graph</span>
<span class="t" style="left:627px;top:614px;color:#a8a8a8;font-size:12px;">Composition 1</span>
<span class="t" style="left:979px;top:614px;color:#a8a8a8;font-size:12px;">Composition 2</span>
<span class="t" style="left:1331px;top:614px;color:#a8a8a8;font-size:12px;">Composition 3</span>
<svg style="position:absolute;left:833px;top:615px;" width="10" height="10" viewBox="0 0 10 10"><path d="M1 1 L9 9 M9 1 L1 9" stroke="#999" stroke-width="1"/></svg>
<svg style="position:absolute;left:1185px;top:615px;" width="10" height="10" viewBox="0 0 10 10"><path d="M1 1 L9 9 M9 1 L1 9" stroke="#999" stroke-width="1"/></svg>
<svg style="position:absolute;left:1538px;top:615px;" width="10" height="10" viewBox="0 0 10 10"><path d="M1 1 L9 9 M9 1 L1 9" stroke="#999" stroke-width="1"/></svg>
<div style="left:852px;top:614px;width:1px;height:12px;background:#999;"></div>
<div style="left:1204px;top:614px;width:1px;height:12px;background:#999;"></div>
<div style="left:1557px;top:609px;width:352px;height:21px;background:#474747;border-radius:4px 4px 0 0;"></div>
<span class="t" style="left:1684px;top:614px;color:#e6e6e6;font-size:12px;">Composition 4</span>
<svg style="position:absolute;left:1890px;top:615px;" width="10" height="10" viewBox="0 0 10 10"><path d="M1 1 L9 9 M9 1 L1 9" stroke="#aaa" stroke-width="1"/></svg>
<div style="left:496px;top:632px;width:255px;height:20px;background:#2a2a2a;border-radius:10px;"></div>
<svg style="position:absolute;left:500px;top:635px;" width="14" height="14" viewBox="0 0 14 14"><circle cx="5.5" cy="5.5" r="4.3" fill="none" stroke="#d0d0d0" stroke-width="1.3"/><path d="M8.6 8.6 L12 12" stroke="#d0d0d0" stroke-width="1.8"/></svg>
<span class="t" style="left:520px;top:636px;color:#8c8c8c;font-size:12px;">Enter a layer name</span>
<div style="left:753px;top:633px;width:20px;height:19px;background:#2b2b2b;background:#2b2b2b;border:1px solid #1f1f1f;border-radius:4px;box-shadow:inset 0 1px 0 #505050;"></div>
<svg style="position:absolute;left:753px;top:633px;" width="20" height="19" viewBox="0 0 20 19"><path d="M10 4.5 V14.5 M5 9.5 H15" stroke="#eee" stroke-width="1.8"/></svg>
<div style="left:797px;top:633px;width:20px;height:19px;background:#2b2b2b;background:#2b2b2b;border:1px solid #1f1f1f;border-radius:4px;box-shadow:inset 0 1px 0 #505050;"></div>
<svg style="position:absolute;left:797px;top:633px;" width="20" height="19" viewBox="0 0 20 19"><circle cx="11.5" cy="7.5" r="4.5" fill="#ddd"/><path d="M4 12 A5 5 0 0 1 8 6" fill="none" stroke="#888" stroke-width="1.5"/><path d="M5 15 A5 5 0 0 1 6 9" fill="none" stroke="#666" stroke-width="1.5"/></svg>
<div style="left:819px;top:633px;width:20px;height:19px;background:#2b2b2b;background:#2b2b2b;border:1px solid #1f1f1f;border-radius:4px;box-shadow:inset 0 1px 0 #505050;"></div>
<svg style="position:absolute;left:819px;top:633px;" width="20" height="19" viewBox="0 0 20 19"><circle cx="5" cy="5" r="1.2" fill="#ccc"/><circle cx="12" cy="5" r="1.2" fill="#ccc"/><circle cx="5" cy="12" r="1.2" fill="#ccc"/><path d="M12 8 L13 11 L16 12 L13 13 L12 16 L11 13 L8 12 L11 11Z" fill="#ddd"/></svg>
<div style="left:841px;top:633px;width:20px;height:19px;background:#2b2b2b;background:#2b2b2b;border:1px solid #1f1f1f;border-radius:4px;box-shadow:inset 0 1px 0 #505050;"></div>
<svg style="position:absolute;left:841px;top:633px;" width="20" height="19" viewBox="0 0 20 19"><path d="M3 5 H17 M3 9.5 H17 M3 14 H17" stroke="#bbb" stroke-width="1"/><circle cx="8" cy="5" r="1.6" fill="#2b2b2b" stroke="#ddd"/><circle cx="12" cy="9.5" r="1.6" fill="#2b2b2b" stroke="#ddd"/><circle cx="8" cy="14" r="1.6" fill="#2b2b2b" stroke="#ddd"/></svg>
<div style="left:863px;top:632px;width:94px;height:20px;background:#2a2a2a;border-radius:3px;"></div>
<span class="t" style="left:868px;top:636px;color:#555;font-size:12px;">F</span>
<span class="t" style="left:880px;top:636px;color:#e6e6e6;font-size:12px;">80</span>
<svg style="position:absolute;left:498px;top:654px;" width="14" height="16" viewBox="0 0 14 16"><rect x="2.5" y="7" width="9" height="7" fill="#cfcfcf"/><path d="M4.5 7 V5 A2.5 2.5 0 0 1 9.5 5 V7" fill="none" stroke="#cfcfcf" stroke-width="1.4"/><rect x="6" y="10" width="2" height="2" fill="#474747"/></svg>
<svg style="position:absolute;left:516px;top:654px;" width="16" height="16" viewBox="0 0 16 16"><ellipse cx="8" cy="8" rx="6.5" ry="4" fill="none" stroke="#cfcfcf" stroke-width="1.1"/><circle cx="8" cy="8" r="2" fill="#cfcfcf"/></svg>
<svg style="position:absolute;left:535px;top:654px;" width="16" height="16" viewBox="0 0 16 16"><path d="M8 2 L14 5 V11.5 L8 14.5 L2 11.5 V5Z M2 5 L8 8 L14 5 M8 8 V14.5" fill="none" stroke="#cfcfcf" stroke-width="1"/></svg>
<svg style="position:absolute;left:554px;top:654px;" width="16" height="16" viewBox="0 0 16 16"><path d="M2 6 H5 L8.5 3 V13 L5 10 H2Z" fill="#cfcfcf"/><path d="M10.5 5.5 A3 3 0 0 1 10.5 10.5 M12.5 3.5 A6 6 0 0 1 12.5 12.5" fill="none" stroke="#cfcfcf" stroke-width="1.1"/></svg>
<svg style="position:absolute;left:573px;top:654px;" width="16" height="16" viewBox="0 0 16 16"><path d="M2.5 13.5 L10 6" stroke="#999" stroke-width="1.5"/><path d="M9 4.5 L11.5 7" stroke="#cfcfcf" stroke-width="2.5"/><circle cx="12" cy="4" r="2" fill="#cfcfcf"/></svg>
<svg style="position:absolute;left:593px;top:655px;" width="15" height="14" viewBox="0 0 15 14"><path d="M1 7 L5 3 H14 V11 H5Z" fill="#cfcfcf"/><circle cx="5.5" cy="7" r="1.6" fill="#2b2b2b"/></svg>
<span class="t" style="left:649px;top:657px;color:#e6e6e6;font-size:12px;">Name</span>
<div style="left:495px;top:827px;width:447px;height:19px;background:#4b4e3e;border-radius:3px;"></div>
<div style="left:496px;top:674px;width:18px;height:18px;background:#2a2a2a;border-radius:3px;"></div>
<div style="left:515px;top:674px;width:18px;height:18px;background:#2a2a2a;border-radius:3px;"></div>
<svg style="position:absolute;left:516px;top:675px;" width="16" height="16" viewBox="0 0 16 16"><path d="M12.6 7.2 A4.7 4.7 0 1 1 10.3 3.6" fill="none" stroke="#d0d0d0" stroke-width="1.2"/><path d="M5.5 7.8 L8 10.3 L13 4.3" fill="none" stroke="#d0d0d0" stroke-width="1.4"/></svg>
<div style="left:573px;top:675px;width:16px;height:16px;background:#6cdc96;border-radius:2px;"></div>
<svg style="position:absolute;left:593px;top:676px;" width="15" height="14" viewBox="0 0 15 14"><path d="M1 7 L5 3 H14 V11 H5Z" fill="#cfcfcf"/><circle cx="5.5" cy="7" r="1.6" fill="#2b2b2b"/></svg>
<div style="left:610px;top:674px;width:32px;height:18px;background:#363636;border-radius:3px;"></div>
<svg style="position:absolute;left:613px;top:679px;" width="10" height="8" viewBox="0 0 10 8"><path d="M1 2 L5 6 L9 2" fill="none" stroke="#888" stroke-width="1"/></svg>
<svg style="position:absolute;left:648px;top:675px;" width="16" height="16" viewBox="0 0 16 16"><rect x="1" y="6" width="8" height="7" fill="#a8d4ff"/><path d="M6 2 H14 M6 4.5 H14 M6 7 H14 M9 9 H14" stroke="#ddd" stroke-width="1"/></svg>
<span class="t" style="left:667px;top:677px;color:#e6e6e6;font-size:12px;">Color Array</span>
<div style="left:905px;top:675px;width:21px;height:17px;background:#2b2b2b;border-radius:4px;"></div>
<svg style="position:absolute;left:905px;top:675px;" width="21" height="17" viewBox="0 0 21 17"><path d="M3.5 8.5 L6 5.5 H8.5 V11.5 H6Z" fill="#c9b26a"/><path d="M12.5 5.5 H15 L17.5 8.5 L15 11.5 H12.5Z" fill="#c050e0"/><rect x="10" y="0" width="1" height="17" fill="#1c1c1c"/></svg>
<svg style="position:absolute;left:930px;top:677px;" width="12" height="12" viewBox="0 0 12 12"><circle cx="6" cy="6" r="4.5" fill="none" stroke="#777" stroke-width="1.1"/></svg>
<div style="left:496px;top:696px;width:18px;height:18px;background:#2a2a2a;border-radius:3px;"></div>
<div style="left:515px;top:696px;width:18px;height:18px;background:#2a2a2a;border-radius:3px;"></div>
<svg style="position:absolute;left:516px;top:697px;" width="16" height="16" viewBox="0 0 16 16"><path d="M12.6 7.2 A4.7 4.7 0 1 1 10.3 3.6" fill="none" stroke="#d0d0d0" stroke-width="1.2"/><path d="M5.5 7.8 L8 10.3 L13 4.3" fill="none" stroke="#d0d0d0" stroke-width="1.4"/></svg>
<div style="left:573px;top:697px;width:16px;height:16px;background:#c8ec78;border-radius:2px;"></div>
<svg style="position:absolute;left:593px;top:698px;" width="15" height="14" viewBox="0 0 15 14"><path d="M1 7 L5 3 H14 V11 H5Z" fill="#cfcfcf"/><circle cx="5.5" cy="7" r="1.6" fill="#2b2b2b"/></svg>
<svg style="position:absolute;left:667px;top:697px;" width="16" height="16" viewBox="0 0 16 16"><g stroke="#7fcf7f" stroke-width="1.1"><path d="M1 2 L4 5 M4 2 L1 5 M10 10 L13 13 M13 10 L10 13 M1 10 L4 13 M4 10 L1 13"/></g><rect x="10" y="2" width="2" height="2" fill="#7fcf7f"/><rect x="6" y="6" width="2" height="2" fill="#7fcf7f"/></svg>
<span class="t" style="left:686px;top:699px;color:#e6e6e6;font-size:12px;">Random [Index]</span>
<div style="left:905px;top:697px;width:21px;height:17px;background:#2b2b2b;border-radius:4px;"></div>
<svg style="position:absolute;left:905px;top:697px;" width="21" height="17" viewBox="0 0 21 17"><path d="M3.5 8.5 L6 5.5 H8.5 V11.5 H6Z" fill="#666"/><path d="M12.5 5.5 H15 L17.5 8.5 L15 11.5 H12.5Z" fill="#c050e0"/><rect x="10" y="0" width="1" height="17" fill="#1c1c1c"/></svg>
<svg style="position:absolute;left:930px;top:699px;" width="12" height="12" viewBox="0 0 12 12"><circle cx="6" cy="6" r="4.5" fill="none" stroke="#777" stroke-width="1.1"/></svg>
<div style="left:496px;top:718px;width:18px;height:18px;background:#2a2a2a;border-radius:3px;"></div>
<div style="left:515px;top:718px;width:18px;height:18px;background:#2a2a2a;border-radius:3px;"></div>
<svg style="position:absolute;left:516px;top:719px;" width="16" height="16" viewBox="0 0 16 16"><path d="M12.6 7.2 A4.7 4.7 0 1 1 10.3 3.6" fill="none" stroke="#d0d0d0" stroke-width="1.2"/><path d="M5.5 7.8 L8 10.3 L13 4.3" fill="none" stroke="#d0d0d0" stroke-width="1.4"/></svg>
<div style="left:573px;top:719px;width:16px;height:16px;background:#c8ec78;border-radius:2px;"></div>
<svg style="position:absolute;left:593px;top:720px;" width="15" height="14" viewBox="0 0 15 14"><path d="M1 7 L5 3 H14 V11 H5Z" fill="#cfcfcf"/><circle cx="5.5" cy="7" r="1.6" fill="#2b2b2b"/></svg>
<svg style="position:absolute;left:648px;top:719px;" width="16" height="16" viewBox="0 0 16 16"><path d="M0.5 6 C2 2.5 3.5 2.5 5 7.5 S8 12.5 9.5 7.5 S12.5 2.5 15.5 9" fill="none" stroke="#7fcf7f" stroke-width="1.3"/></svg>
<span class="t" style="left:667px;top:721px;color:#e6e6e6;font-size:12px;">Oscillator [Position.Z] Cosine</span>
<div style="left:905px;top:719px;width:21px;height:17px;background:#2b2b2b;border-radius:4px;"></div>
<svg style="position:absolute;left:905px;top:719px;" width="21" height="17" viewBox="0 0 21 17"><path d="M3.5 8.5 L6 5.5 H8.5 V11.5 H6Z" fill="#c9b26a"/><path d="M12.5 5.5 H15 L17.5 8.5 L15 11.5 H12.5Z" fill="#c050e0"/><rect x="10" y="0" width="1" height="17" fill="#1c1c1c"/></svg>
<svg style="position:absolute;left:930px;top:721px;" width="12" height="12" viewBox="0 0 12 12"><circle cx="6" cy="6" r="4.5" fill="none" stroke="#777" stroke-width="1.1"/></svg>
<div style="left:496px;top:740px;width:18px;height:18px;background:#2a2a2a;border-radius:3px;"></div>
<div style="left:515px;top:740px;width:18px;height:18px;background:#2a2a2a;border-radius:3px;"></div>
<svg style="position:absolute;left:516px;top:741px;" width="16" height="16" viewBox="0 0 16 16"><path d="M12.6 7.2 A4.7 4.7 0 1 1 10.3 3.6" fill="none" stroke="#d0d0d0" stroke-width="1.2"/><path d="M5.5 7.8 L8 10.3 L13 4.3" fill="none" stroke="#d0d0d0" stroke-width="1.4"/></svg>
<div style="left:573px;top:741px;width:16px;height:16px;background:#c8ec78;border-radius:2px;"></div>
<svg style="position:absolute;left:593px;top:742px;" width="15" height="14" viewBox="0 0 15 14"><path d="M1 7 L5 3 H14 V11 H5Z" fill="#cfcfcf"/><circle cx="5.5" cy="7" r="1.6" fill="#2b2b2b"/></svg>
<svg style="position:absolute;left:648px;top:741px;" width="16" height="16" viewBox="0 0 16 16"><path d="M4 2 H12 L8 7Z" fill="#7fcf7f"/><path d="M8 6 V14" stroke="#7fcf7f" stroke-width="1.4"/><rect x="1" y="7" width="1.5" height="1.5" fill="#7fcf7f"/><rect x="13.5" y="7" width="1.5" height="1.5" fill="#7fcf7f"/></svg>
<span class="t" style="left:667px;top:743px;color:#e6e6e6;font-size:12px;">Frame [Time]</span>
<div style="left:905px;top:741px;width:21px;height:17px;background:#2b2b2b;border-radius:4px;"></div>
<svg style="position:absolute;left:905px;top:741px;" width="21" height="17" viewBox="0 0 21 17"><path d="M3.5 8.5 L6 5.5 H8.5 V11.5 H6Z" fill="#666"/><path d="M12.5 5.5 H15 L17.5 8.5 L15 11.5 H12.5Z" fill="#c050e0"/><rect x="10" y="0" width="1" height="17" fill="#1c1c1c"/></svg>
<svg style="position:absolute;left:930px;top:743px;" width="12" height="12" viewBox="0 0 12 12"><circle cx="6" cy="6" r="4.5" fill="none" stroke="#777" stroke-width="1.1"/></svg>
<div style="left:496px;top:762px;width:18px;height:18px;background:#2a2a2a;border-radius:3px;"></div>
<div style="left:515px;top:762px;width:18px;height:18px;background:#2a2a2a;border-radius:3px;"></div>
<svg style="position:absolute;left:516px;top:763px;" width="16" height="16" viewBox="0 0 16 16"><path d="M12.6 7.2 A4.7 4.7 0 1 1 10.3 3.6" fill="none" stroke="#d0d0d0" stroke-width="1.2"/><path d="M5.5 7.8 L8 10.3 L13 4.3" fill="none" stroke="#d0d0d0" stroke-width="1.4"/></svg>
<div style="left:573px;top:763px;width:16px;height:16px;background:#c8ec78;border-radius:2px;"></div>
<svg style="position:absolute;left:593px;top:764px;" width="15" height="14" viewBox="0 0 15 14"><path d="M1 7 L5 3 H14 V11 H5Z" fill="#cfcfcf"/><circle cx="5.5" cy="7" r="1.6" fill="#2b2b2b"/></svg>
<svg style="position:absolute;left:648px;top:763px;" width="16" height="16" viewBox="0 0 16 16"><path d="M0.5 6 C2 2.5 3.5 2.5 5 7.5 S8 12.5 9.5 7.5 S12.5 2.5 15.5 9" fill="none" stroke="#7fcf7f" stroke-width="1.3"/></svg>
<span class="t" style="left:667px;top:765px;color:#e6e6e6;font-size:12px;">Oscillator [Position.X] Sine</span>
<div style="left:905px;top:763px;width:21px;height:17px;background:#2b2b2b;border-radius:4px;"></div>
<svg style="position:absolute;left:905px;top:763px;" width="21" height="17" viewBox="0 0 21 17"><path d="M3.5 8.5 L6 5.5 H8.5 V11.5 H6Z" fill="#c9b26a"/><path d="M12.5 5.5 H15 L17.5 8.5 L15 11.5 H12.5Z" fill="#c050e0"/><rect x="10" y="0" width="1" height="17" fill="#1c1c1c"/></svg>
<svg style="position:absolute;left:930px;top:765px;" width="12" height="12" viewBox="0 0 12 12"><circle cx="6" cy="6" r="4.5" fill="none" stroke="#777" stroke-width="1.1"/></svg>
<div style="left:496px;top:784px;width:18px;height:18px;background:#2a2a2a;border-radius:3px;"></div>
<div style="left:515px;top:784px;width:18px;height:18px;background:#2a2a2a;border-radius:3px;"></div>
<svg style="position:absolute;left:516px;top:785px;" width="16" height="16" viewBox="0 0 16 16"><path d="M12.6 7.2 A4.7 4.7 0 1 1 10.3 3.6" fill="none" stroke="#d0d0d0" stroke-width="1.2"/><path d="M5.5 7.8 L8 10.3 L13 4.3" fill="none" stroke="#d0d0d0" stroke-width="1.4"/></svg>
<div style="left:573px;top:785px;width:16px;height:16px;background:#c8ec78;border-radius:2px;"></div>
<svg style="position:absolute;left:593px;top:786px;" width="15" height="14" viewBox="0 0 15 14"><path d="M1 7 L5 3 H14 V11 H5Z" fill="#cfcfcf"/><circle cx="5.5" cy="7" r="1.6" fill="#2b2b2b"/></svg>
<svg style="position:absolute;left:648px;top:785px;" width="16" height="16" viewBox="0 0 16 16"><path d="M3 2 V13 H14 M3 13 L10 7" fill="none" stroke="#ccc" stroke-width="1.1"/><path d="M1 4 L3 2 L5 4 M12 11 L14 13 L12 15" fill="none" stroke="#7fcf7f" stroke-width="1.1"/></svg>
<span class="t" style="left:667px;top:787px;color:#e6e6e6;font-size:12px;">3D Matrix [Duplicator]</span>
<div style="left:905px;top:785px;width:21px;height:17px;background:#2b2b2b;border-radius:4px;"></div>
<svg style="position:absolute;left:905px;top:785px;" width="21" height="17" viewBox="0 0 21 17"><path d="M3.5 8.5 L6 5.5 H8.5 V11.5 H6Z" fill="#c9b26a"/><path d="M12.5 5.5 H15 L17.5 8.5 L15 11.5 H12.5Z" fill="#c050e0"/><rect x="10" y="0" width="1" height="17" fill="#1c1c1c"/></svg>
<svg style="position:absolute;left:930px;top:787px;" width="12" height="12" viewBox="0 0 12 12"><circle cx="6" cy="6" r="4.5" fill="none" stroke="#777" stroke-width="1.1"/></svg>
<div style="left:496px;top:806px;width:18px;height:18px;background:#2a2a2a;border-radius:3px;"></div>
<div style="left:515px;top:806px;width:18px;height:18px;background:#2a2a2a;border-radius:3px;"></div>
<svg style="position:absolute;left:516px;top:807px;" width="16" height="16" viewBox="0 0 16 16"><path d="M12.6 7.2 A4.7 4.7 0 1 1 10.3 3.6" fill="none" stroke="#d0d0d0" stroke-width="1.2"/><path d="M5.5 7.8 L8 10.3 L13 4.3" fill="none" stroke="#d0d0d0" stroke-width="1.4"/></svg>
<div style="left:573px;top:807px;width:16px;height:16px;background:#f28cb4;border-radius:2px;"></div>
<svg style="position:absolute;left:593px;top:808px;" width="15" height="14" viewBox="0 0 15 14"><path d="M1 7 L5 3 H14 V11 H5Z" fill="#cfcfcf"/><circle cx="5.5" cy="7" r="1.6" fill="#2b2b2b"/></svg>
<svg style="position:absolute;left:648px;top:807px;" width="16" height="16" viewBox="0 0 16 16"><rect x="1.5" y="1.5" width="12" height="12" fill="#2a2a2a" stroke="#ddd" stroke-width="1.2"/><circle cx="7.5" cy="7.5" r="3.5" fill="#f0a0b0"/></svg>
<span class="t" style="left:667px;top:809px;color:#e6e6e6;font-size:12px;">Blur [Sub-Mesh [Duplicator]]</span>
<div style="left:905px;top:807px;width:21px;height:17px;background:#2b2b2b;border-radius:4px;"></div>
<svg style="position:absolute;left:905px;top:807px;" width="21" height="17" viewBox="0 0 21 17"><path d="M3.5 8.5 L6 5.5 H8.5 V11.5 H6Z" fill="#666"/><path d="M12.5 5.5 H15 L17.5 8.5 L15 11.5 H12.5Z" fill="#c050e0"/><rect x="10" y="0" width="1" height="17" fill="#1c1c1c"/></svg>
<svg style="position:absolute;left:930px;top:809px;" width="12" height="12" viewBox="0 0 12 12"><circle cx="6" cy="6" r="4.5" fill="none" stroke="#777" stroke-width="1.1"/></svg>
<div style="left:496px;top:828px;width:18px;height:18px;background:#2a2a2a;border-radius:3px;"></div>
<div style="left:515px;top:828px;width:18px;height:18px;background:#2a2a2a;border-radius:3px;"></div>
<svg style="position:absolute;left:516px;top:829px;" width="16" height="16" viewBox="0 0 16 16"><path d="M12.6 7.2 A4.7 4.7 0 1 1 10.3 3.6" fill="none" stroke="#d0d0d0" stroke-width="1.2"/><path d="M5.5 7.8 L8 10.3 L13 4.3" fill="none" stroke="#d0d0d0" stroke-width="1.4"/></svg>
<div style="left:573px;top:829px;width:16px;height:16px;background:#c8ec78;border-radius:2px;"></div>
<svg style="position:absolute;left:593px;top:830px;" width="15" height="14" viewBox="0 0 15 14"><path d="M1 7 L5 3 H14 V11 H5Z" fill="#cfcfcf"/><circle cx="5.5" cy="7" r="1.6" fill="#2b2b2b"/></svg>
<svg style="position:absolute;left:648px;top:829px;" width="16" height="16" viewBox="0 0 16 16"><rect x="1" y="2" width="13" height="2.5" fill="#8fe08f"/><rect x="1" y="6.5" width="13" height="1.5" fill="#ddd"/><rect x="1" y="10" width="13" height="1.5" fill="#ddd"/></svg>
<span class="t" style="left:667px;top:831px;color:#e6e6e6;font-size:12px;">Sub-Mesh [Duplicator]</span>
<div style="left:905px;top:829px;width:21px;height:17px;background:#2b2b2b;border-radius:4px;"></div>
<svg style="position:absolute;left:905px;top:829px;" width="21" height="17" viewBox="0 0 21 17"><path d="M3.5 8.5 L6 5.5 H8.5 V11.5 H6Z" fill="#c9b26a"/><path d="M12.5 5.5 H15 L17.5 8.5 L15 11.5 H12.5Z" fill="#c050e0"/><rect x="10" y="0" width="1" height="17" fill="#1c1c1c"/></svg>
<svg style="position:absolute;left:930px;top:831px;" width="12" height="12" viewBox="0 0 12 12"><circle cx="6" cy="6" r="4.5" fill="none" stroke="#777" stroke-width="1.1"/></svg>
<div style="left:496px;top:850px;width:18px;height:18px;background:#2a2a2a;border-radius:3px;"></div>
<div style="left:515px;top:850px;width:18px;height:18px;background:#2a2a2a;border-radius:3px;"></div>
<svg style="position:absolute;left:516px;top:851px;" width="16" height="16" viewBox="0 0 16 16"><ellipse cx="8" cy="8" rx="6.5" ry="4" fill="none" stroke="#d0d0d0" stroke-width="1.1"/><circle cx="8" cy="8" r="2" fill="#d0d0d0"/></svg>
<div style="left:534px;top:850px;width:18px;height:18px;background:#2a2a2a;border-radius:3px;"></div>
<div style="left:573px;top:851px;width:16px;height:16px;background:#fce57a;border-radius:2px;"></div>
<svg style="position:absolute;left:593px;top:852px;" width="15" height="14" viewBox="0 0 15 14"><path d="M1 7 L5 3 H14 V11 H5Z" fill="#cfcfcf"/><circle cx="5.5" cy="7" r="1.6" fill="#2b2b2b"/></svg>
<svg style="position:absolute;left:648px;top:851px;" width="16" height="16" viewBox="0 0 16 16"><g fill="#e6d46a"><rect x="1" y="1" width="1.8" height="1.8"/><rect x="1" y="6.5" width="1.8" height="1.8"/><rect x="1" y="12" width="1.8" height="1.8"/><rect x="6.5" y="1" width="1.8" height="1.8"/><rect x="6.5" y="6.5" width="1.8" height="1.8"/><rect x="6.5" y="12" width="1.8" height="1.8"/><rect x="12" y="1" width="1.8" height="1.8"/><rect x="12" y="6.5" width="1.8" height="1.8"/><rect x="12" y="12" width="1.8" height="1.8"/></g></svg>
<span class="t" style="left:667px;top:853px;color:#e6e6e6;font-size:12px;">Duplicator</span>
<div style="left:905px;top:851px;width:21px;height:17px;background:#2b2b2b;border-radius:4px;"></div>
<svg style="position:absolute;left:905px;top:851px;" width="21" height="17" viewBox="0 0 21 17"><path d="M3.5 8.5 L6 5.5 H8.5 V11.5 H6Z" fill="#c9b26a"/><path d="M12.5 5.5 H15 L17.5 8.5 L15 11.5 H12.5Z" fill="#c050e0"/><rect x="10" y="0" width="1" height="17" fill="#1c1c1c"/></svg>
<svg style="position:absolute;left:930px;top:853px;" width="12" height="12" viewBox="0 0 12 12"><circle cx="6" cy="6" r="4.5" fill="none" stroke="#777" stroke-width="1.1"/></svg>
<div style="left:496px;top:872px;width:18px;height:18px;background:#2a2a2a;border-radius:3px;"></div>
<div style="left:515px;top:872px;width:18px;height:18px;background:#2a2a2a;border-radius:3px;"></div>
<div style="left:534px;top:872px;width:18px;height:18px;background:#2a2a2a;border-radius:3px;"></div>
<div style="left:573px;top:873px;width:16px;height:16px;background:#fce57a;border-radius:2px;"></div>
<svg style="position:absolute;left:593px;top:874px;" width="15" height="14" viewBox="0 0 15 14"><path d="M1 7 L5 3 H14 V11 H5Z" fill="#cfcfcf"/><circle cx="5.5" cy="7" r="1.6" fill="#2b2b2b"/></svg>
<div style="left:610px;top:872px;width:32px;height:18px;background:#363636;border-radius:3px;"></div>
<svg style="position:absolute;left:613px;top:877px;" width="10" height="8" viewBox="0 0 10 8"><path d="M1 2 L5 6 L9 2" fill="none" stroke="#888" stroke-width="1"/></svg>
<svg style="position:absolute;left:648px;top:873px;" width="16" height="16" viewBox="0 0 16 16"><rect x="1.5" y="1.5" width="12" height="12" fill="none" stroke="#e6d46a" stroke-width="1.2" stroke-dasharray="3 2"/></svg>
<span class="t" style="left:667px;top:875px;color:#9a9a9a;font-size:12px;">Ellipse Shape</span>
<div style="left:905px;top:873px;width:21px;height:17px;background:#2b2b2b;border-radius:4px;"></div>
<svg style="position:absolute;left:905px;top:873px;" width="21" height="17" viewBox="0 0 21 17"><path d="M3.5 8.5 L6 5.5 H8.5 V11.5 H6Z" fill="#c9b26a"/><path d="M12.5 5.5 H15 L17.5 8.5 L15 11.5 H12.5Z" fill="#c050e0"/><rect x="10" y="0" width="1" height="17" fill="#1c1c1c"/></svg>
<svg style="position:absolute;left:930px;top:875px;" width="12" height="12" viewBox="0 0 12 12"><circle cx="6" cy="6" r="4.5" fill="none" stroke="#777" stroke-width="1.1"/></svg>
<div style="left:496px;top:894px;width:18px;height:18px;background:#2a2a2a;border-radius:3px;"></div>
<div style="left:515px;top:894px;width:18px;height:18px;background:#2a2a2a;border-radius:3px;"></div>
<svg style="position:absolute;left:516px;top:895px;" width="16" height="16" viewBox="0 0 16 16"><path d="M12.6 7.2 A4.7 4.7 0 1 1 10.3 3.6" fill="none" stroke="#d0d0d0" stroke-width="1.2"/><path d="M5.5 7.8 L8 10.3 L13 4.3" fill="none" stroke="#d0d0d0" stroke-width="1.4"/></svg>
<div style="left:573px;top:895px;width:16px;height:16px;background:#5a8ae8;border-radius:2px;"></div>
<svg style="position:absolute;left:593px;top:896px;" width="15" height="14" viewBox="0 0 15 14"><path d="M1 7 L5 3 H14 V11 H5Z" fill="#cfcfcf"/><circle cx="5.5" cy="7" r="1.6" fill="#2b2b2b"/></svg>
<svg style="position:absolute;left:667px;top:895px;" width="16" height="16" viewBox="0 0 16 16"><rect x="1" y="5" width="9" height="9" fill="#a8d4ff"/><rect x="4" y="7" width="2" height="5" fill="#2a2a2a"/><path d="M12 1 L12.7 3.3 L15 4 L12.7 4.7 L12 7 L11.3 4.7 L9 4 L11.3 3.3Z" fill="#ddd"/></svg>
<span class="t" style="left:686px;top:897px;color:#e6e6e6;font-size:12px;">Index Context [Number]</span>
<div style="left:905px;top:895px;width:21px;height:17px;background:#2b2b2b;border-radius:4px;"></div>
<svg style="position:absolute;left:905px;top:895px;" width="21" height="17" viewBox="0 0 21 17"><path d="M3.5 8.5 L6 5.5 H8.5 V11.5 H6Z" fill="#666"/><path d="M12.5 5.5 H15 L17.5 8.5 L15 11.5 H12.5Z" fill="#c050e0"/><rect x="10" y="0" width="1" height="17" fill="#1c1c1c"/></svg>
<svg style="position:absolute;left:930px;top:897px;" width="12" height="12" viewBox="0 0 12 12"><circle cx="6" cy="6" r="4.5" fill="none" stroke="#777" stroke-width="1.1"/></svg>
<div style="left:496px;top:916px;width:18px;height:18px;background:#2a2a2a;border-radius:3px;"></div>
<div style="left:515px;top:916px;width:18px;height:18px;background:#2a2a2a;border-radius:3px;"></div>
<svg style="position:absolute;left:516px;top:917px;" width="16" height="16" viewBox="0 0 16 16"><path d="M12.6 7.2 A4.7 4.7 0 1 1 10.3 3.6" fill="none" stroke="#d0d0d0" stroke-width="1.2"/><path d="M5.5 7.8 L8 10.3 L13 4.3" fill="none" stroke="#d0d0d0" stroke-width="1.4"/></svg>
<div style="left:573px;top:917px;width:16px;height:16px;background:#5a8ae8;border-radius:2px;"></div>
<svg style="position:absolute;left:593px;top:918px;" width="15" height="14" viewBox="0 0 15 14"><path d="M1 7 L5 3 H14 V11 H5Z" fill="#cfcfcf"/><circle cx="5.5" cy="7" r="1.6" fill="#2b2b2b"/></svg>
<svg style="position:absolute;left:667px;top:917px;" width="16" height="16" viewBox="0 0 16 16"><text x="1" y="8" font-size="7" font-family="Liberation Sans" fill="#a8d4ff">abc</text><path d="M1 10.5 H15 M1 13 H15" stroke="#a8d4ff" stroke-width="1"/></svg>
<span class="t" style="left:686px;top:919px;color:#e6e6e6;font-size:12px;">String Generator [String]</span>
<div style="left:905px;top:917px;width:21px;height:17px;background:#2b2b2b;border-radius:4px;"></div>
<svg style="position:absolute;left:905px;top:917px;" width="21" height="17" viewBox="0 0 21 17"><path d="M3.5 8.5 L6 5.5 H8.5 V11.5 H6Z" fill="#c9b26a"/><path d="M12.5 5.5 H15 L17.5 8.5 L15 11.5 H12.5Z" fill="#c050e0"/><rect x="10" y="0" width="1" height="17" fill="#1c1c1c"/></svg>
<svg style="position:absolute;left:930px;top:919px;" width="12" height="12" viewBox="0 0 12 12"><circle cx="6" cy="6" r="4.5" fill="none" stroke="#777" stroke-width="1.1"/></svg>
<div style="left:496px;top:938px;width:18px;height:18px;background:#2a2a2a;border-radius:3px;"></div>
<div style="left:515px;top:938px;width:18px;height:18px;background:#2a2a2a;border-radius:3px;"></div>
<svg style="position:absolute;left:516px;top:939px;" width="16" height="16" viewBox="0 0 16 16"><ellipse cx="8" cy="8" rx="6.5" ry="4" fill="none" stroke="#5a5a5a" stroke-width="1.1"/><circle cx="8" cy="8" r="2" fill="#5a5a5a"/></svg>
<div style="left:534px;top:938px;width:18px;height:18px;background:#2a2a2a;border-radius:3px;"></div>
<div style="left:573px;top:939px;width:16px;height:16px;background:#b98ef5;border-radius:2px;"></div>
<svg style="position:absolute;left:593px;top:940px;" width="15" height="14" viewBox="0 0 15 14"><path d="M1 7 L5 3 H14 V11 H5Z" fill="#cfcfcf"/><circle cx="5.5" cy="7" r="1.6" fill="#2b2b2b"/></svg>
<svg style="position:absolute;left:667px;top:939px;" width="16" height="16" viewBox="0 0 16 16"><rect x="1.5" y="1.5" width="13" height="13" fill="none" stroke="#ddd" stroke-width="1" stroke-dasharray="2 1.5"/><path d="M4 4 H12 V6 H9 V13 H7 V6 H4Z" fill="#e6d46a"/></svg>
<span class="t" style="left:686px;top:941px;color:#9a9a9a;font-size:12px;">Cavalry</span>
<div style="left:905px;top:939px;width:21px;height:17px;background:#2b2b2b;border-radius:4px;"></div>
<svg style="position:absolute;left:905px;top:939px;" width="21" height="17" viewBox="0 0 21 17"><path d="M3.5 8.5 L6 5.5 H8.5 V11.5 H6Z" fill="#c9b26a"/><path d="M12.5 5.5 H15 L17.5 8.5 L15 11.5 H12.5Z" fill="#777"/><rect x="10" y="0" width="1" height="17" fill="#1c1c1c"/></svg>
<svg style="position:absolute;left:930px;top:941px;" width="12" height="12" viewBox="0 0 12 12"><circle cx="6" cy="6" r="4.5" fill="none" stroke="#777" stroke-width="1.1"/></svg>
<div style="left:905px;top:851px;width:11px;height:17px;border:1px solid #c9b26a;border-radius:3px 0 0 3px"></div>
<div style="left:916px;top:807px;width:10px;height:17px;border:1px solid #a040c0;border-radius:0 3px 3px 0"></div>
<div style="left:957px;top:672px;width:6px;height:304px;background:#2a2a2a;"></div>
<div style="left:947px;top:676px;width:10px;height:280px;background:#555;border-radius:5px;"></div>
<div style="left:961px;top:808.0px;width:2px;height:2px;background:#8a8a8a;"></div>
<div style="left:961px;top:811.3px;width:2px;height:2px;background:#8a8a8a;"></div>
<div style="left:961px;top:814.6px;width:2px;height:2px;background:#8a8a8a;"></div>
<div style="left:961px;top:817.9px;width:2px;height:2px;background:#8a8a8a;"></div>
<div style="left:961px;top:821.2px;width:2px;height:2px;background:#8a8a8a;"></div>
<div style="left:496px;top:964px;width:448px;height:10px;background:#555;border-radius:5px;"></div>
<div style="left:946px;top:958px;width:13px;height:18px;background:#2a2a2a;"></div>
<div style="left:497px;top:978px;width:20px;height:19px;background:#2b2b2b;background:#2b2b2b;border:1px solid #1f1f1f;border-radius:4px;box-shadow:inset 0 1px 0 #505050;"></div>
<svg style="position:absolute;left:499px;top:980px;" width="16" height="15" viewBox="0 0 16 15"><path d="M1 7 L5 3 H14 V11 H5Z" fill="#cfcfcf"/><circle cx="5.5" cy="7" r="1.6" fill="#2b2b2b"/></svg>
<span class="t" style="left:520px;top:981px;color:#e6e6e6;font-size:12px;">1 selected</span>
<div style="left:750px;top:978px;width:19px;height:19px;background:#2b2b2b;background:#2b2b2b;border:1px solid #1f1f1f;border-radius:4px;box-shadow:inset 0 1px 0 #505050;"></div>
<svg style="position:absolute;left:750px;top:978px;" width="19" height="19" viewBox="0 0 19 19"><rect x="4" y="4" width="11" height="11" fill="none" stroke="#ccc" stroke-width="1.2"/><rect x="8" y="8" width="3" height="3" fill="#ccc"/></svg>
<div style="left:774px;top:978px;width:182px;height:19px;background:#5a5a5a;border-radius:4px;"></div>
<div style="left:775px;top:979px;width:86px;height:17px;background:#2a2a2a;border-radius:3px;"></div>
<svg style="position:absolute;left:779px;top:981px;" width="14" height="13" viewBox="0 0 14 13"><path d="M1 2 H10 M3 6.5 H13 M1 11 H9" stroke="#2ecc71" stroke-width="2"/></svg>
<span class="t" style="left:796px;top:981px;color:#eeeeee;font-size:12px;">Time Editor</span>
<svg style="position:absolute;left:868px;top:980px;" width="14" height="14" viewBox="0 0 14 14"><path d="M1.5 1 V13 H13.5" fill="none" stroke="#ccc" stroke-width="1.1"/><path d="M3 12 L12 3" stroke="#ccc" stroke-width="1"/></svg>
<span class="t" style="left:885px;top:981px;color:#eeeeee;font-size:12px;">Graph Editor</span>
<div style="left:966px;top:631px;width:948px;height:22px;background:#212121;"></div>
<div style="left:975px;top:646px;width:1px;height:8px;background:#8c8c8c;"></div>
<span class="t" style="left:969px;top:632px;color:#e0e0e0;font-size:12px;">0</span>
<div style="left:986px;top:650px;width:1px;height:4px;background:#8c8c8c;"></div>
<div style="left:997px;top:650px;width:1px;height:4px;background:#8c8c8c;"></div>
<div style="left:1008px;top:650px;width:1px;height:4px;background:#8c8c8c;"></div>
<div style="left:1020px;top:650px;width:1px;height:4px;background:#8c8c8c;"></div>
<div style="left:1031px;top:646px;width:1px;height:8px;background:#8c8c8c;"></div>
<span class="t" style="left:1023.608125px;top:632px;color:#e0e0e0;font-size:12px;">15</span>
<div style="left:1042px;top:650px;width:1px;height:4px;background:#8c8c8c;"></div>
<div style="left:1053px;top:650px;width:1px;height:4px;background:#8c8c8c;"></div>
<div style="left:1064px;top:650px;width:1px;height:4px;background:#8c8c8c;"></div>
<div style="left:1075px;top:650px;width:1px;height:4px;background:#8c8c8c;"></div>
<div style="left:1087px;top:646px;width:1px;height:8px;background:#8c8c8c;"></div>
<span class="t" style="left:1079.388125px;top:632px;color:#e0e0e0;font-size:12px;">30</span>
<div style="left:1098px;top:650px;width:1px;height:4px;background:#8c8c8c;"></div>
<div style="left:1109px;top:650px;width:1px;height:4px;background:#8c8c8c;"></div>
<div style="left:1120px;top:650px;width:1px;height:4px;background:#8c8c8c;"></div>
<div style="left:1131px;top:650px;width:1px;height:4px;background:#8c8c8c;"></div>
<div style="left:1142px;top:646px;width:1px;height:8px;background:#8c8c8c;"></div>
<span class="t" style="left:1135.168125px;top:632px;color:#e0e0e0;font-size:12px;">45</span>
<div style="left:1153px;top:650px;width:1px;height:4px;background:#8c8c8c;"></div>
<div style="left:1165px;top:650px;width:1px;height:4px;background:#8c8c8c;"></div>
<div style="left:1176px;top:650px;width:1px;height:4px;background:#8c8c8c;"></div>
<div style="left:1187px;top:650px;width:1px;height:4px;background:#8c8c8c;"></div>
<div style="left:1198px;top:646px;width:1px;height:8px;background:#8c8c8c;"></div>
<span class="t" style="left:1190.948125px;top:632px;color:#e0e0e0;font-size:12px;">60</span>
<div style="left:1209px;top:650px;width:1px;height:4px;background:#8c8c8c;"></div>
<div style="left:1220px;top:650px;width:1px;height:4px;background:#8c8c8c;"></div>
<div style="left:1232px;top:650px;width:1px;height:4px;background:#8c8c8c;"></div>
<div style="left:1243px;top:650px;width:1px;height:4px;background:#8c8c8c;"></div>
<div style="left:1254px;top:646px;width:1px;height:8px;background:#8c8c8c;"></div>
<span class="t" style="left:1246.728125px;top:632px;color:#e0e0e0;font-size:12px;">75</span>
<div style="left:1265px;top:650px;width:1px;height:4px;background:#8c8c8c;"></div>
<div style="left:1276px;top:650px;width:1px;height:4px;background:#8c8c8c;"></div>
<div style="left:1287px;top:650px;width:1px;height:4px;background:#8c8c8c;"></div>
<div style="left:1299px;top:650px;width:1px;height:4px;background:#8c8c8c;"></div>
<div style="left:1310px;top:646px;width:1px;height:8px;background:#8c8c8c;"></div>
<span class="t" style="left:1302.508125px;top:632px;color:#e0e0e0;font-size:12px;">90</span>
<div style="left:1321px;top:650px;width:1px;height:4px;background:#8c8c8c;"></div>
<div style="left:1332px;top:650px;width:1px;height:4px;background:#8c8c8c;"></div>
<div style="left:1343px;top:650px;width:1px;height:4px;background:#8c8c8c;"></div>
<div style="left:1354px;top:650px;width:1px;height:4px;background:#8c8c8c;"></div>
<div style="left:1365px;top:646px;width:1px;height:8px;background:#8c8c8c;"></div>
<span class="t" style="left:1354.9521875px;top:632px;color:#e0e0e0;font-size:12px;">105</span>
<div style="left:1377px;top:650px;width:1px;height:4px;background:#8c8c8c;"></div>
<div style="left:1388px;top:650px;width:1px;height:4px;background:#8c8c8c;"></div>
<div style="left:1399px;top:650px;width:1px;height:4px;background:#8c8c8c;"></div>
<div style="left:1410px;top:650px;width:1px;height:4px;background:#8c8c8c;"></div>
<div style="left:1421px;top:646px;width:1px;height:8px;background:#8c8c8c;"></div>
<span class="t" style="left:1410.7321875px;top:632px;color:#e0e0e0;font-size:12px;">120</span>
<div style="left:1432px;top:650px;width:1px;height:4px;background:#8c8c8c;"></div>
<div style="left:1444px;top:650px;width:1px;height:4px;background:#8c8c8c;"></div>
<div style="left:1455px;top:650px;width:1px;height:4px;background:#8c8c8c;"></div>
<div style="left:1466px;top:650px;width:1px;height:4px;background:#8c8c8c;"></div>
<div style="left:1477px;top:646px;width:1px;height:8px;background:#8c8c8c;"></div>
<span class="t" style="left:1466.5121875px;top:632px;color:#e0e0e0;font-size:12px;">135</span>
<div style="left:1488px;top:650px;width:1px;height:4px;background:#8c8c8c;"></div>
<div style="left:1499px;top:650px;width:1px;height:4px;background:#8c8c8c;"></div>
<div style="left:1510px;top:650px;width:1px;height:4px;background:#8c8c8c;"></div>
<div style="left:1522px;top:650px;width:1px;height:4px;background:#8c8c8c;"></div>
<div style="left:1533px;top:646px;width:1px;height:8px;background:#8c8c8c;"></div>
<span class="t" style="left:1522.2921875px;top:632px;color:#e0e0e0;font-size:12px;">150</span>
<div style="left:1544px;top:650px;width:1px;height:4px;background:#8c8c8c;"></div>
<div style="left:1555px;top:650px;width:1px;height:4px;background:#8c8c8c;"></div>
<div style="left:1566px;top:650px;width:1px;height:4px;background:#8c8c8c;"></div>
<div style="left:1577px;top:650px;width:1px;height:4px;background:#8c8c8c;"></div>
<div style="left:1589px;top:646px;width:1px;height:8px;background:#8c8c8c;"></div>
<span class="t" style="left:1578.0721875px;top:632px;color:#e0e0e0;font-size:12px;">165</span>
<div style="left:1600px;top:650px;width:1px;height:4px;background:#8c8c8c;"></div>
<div style="left:1611px;top:650px;width:1px;height:4px;background:#8c8c8c;"></div>
<div style="left:1622px;top:650px;width:1px;height:4px;background:#8c8c8c;"></div>
<div style="left:1633px;top:650px;width:1px;height:4px;background:#8c8c8c;"></div>
<div style="left:1644px;top:646px;width:1px;height:8px;background:#8c8c8c;"></div>
<span class="t" style="left:1633.8521875000001px;top:632px;color:#e0e0e0;font-size:12px;">180</span>
<div style="left:1656px;top:650px;width:1px;height:4px;background:#8c8c8c;"></div>
<div style="left:1667px;top:650px;width:1px;height:4px;background:#8c8c8c;"></div>
<div style="left:1678px;top:650px;width:1px;height:4px;background:#8c8c8c;"></div>
<div style="left:1689px;top:650px;width:1px;height:4px;background:#8c8c8c;"></div>
<div style="left:1700px;top:646px;width:1px;height:8px;background:#8c8c8c;"></div>
<span class="t" style="left:1689.6321874999999px;top:632px;color:#e0e0e0;font-size:12px;">195</span>
<div style="left:1711px;top:650px;width:1px;height:4px;background:#8c8c8c;"></div>
<div style="left:1722px;top:650px;width:1px;height:4px;background:#8c8c8c;"></div>
<div style="left:1734px;top:650px;width:1px;height:4px;background:#8c8c8c;"></div>
<div style="left:1745px;top:650px;width:1px;height:4px;background:#8c8c8c;"></div>
<div style="left:1756px;top:646px;width:1px;height:8px;background:#8c8c8c;"></div>
<span class="t" style="left:1745.4121875px;top:632px;color:#e0e0e0;font-size:12px;">210</span>
<div style="left:1767px;top:650px;width:1px;height:4px;background:#8c8c8c;"></div>
<div style="left:1778px;top:650px;width:1px;height:4px;background:#8c8c8c;"></div>
<div style="left:1789px;top:650px;width:1px;height:4px;background:#8c8c8c;"></div>
<div style="left:1801px;top:650px;width:1px;height:4px;background:#8c8c8c;"></div>
<div style="left:1812px;top:646px;width:1px;height:8px;background:#8c8c8c;"></div>
<span class="t" style="left:1801.1921874999998px;top:632px;color:#e0e0e0;font-size:12px;">225</span>
<div style="left:1823px;top:650px;width:1px;height:4px;background:#8c8c8c;"></div>
<div style="left:1834px;top:650px;width:1px;height:4px;background:#8c8c8c;"></div>
<div style="left:1845px;top:650px;width:1px;height:4px;background:#8c8c8c;"></div>
<div style="left:1856px;top:650px;width:1px;height:4px;background:#8c8c8c;"></div>
<div style="left:1867px;top:646px;width:1px;height:8px;background:#8c8c8c;"></div>
<span class="t" style="left:1856.9721875px;top:632px;color:#e0e0e0;font-size:12px;">240</span>
<div style="left:1879px;top:650px;width:1px;height:4px;background:#8c8c8c;"></div>
<div style="left:1890px;top:650px;width:1px;height:4px;background:#8c8c8c;"></div>
<div style="left:1901px;top:650px;width:1px;height:4px;background:#8c8c8c;"></div>
<div style="left:970px;top:653px;width:940px;height:18px;background:#474747;"></div>
<div style="left:970px;top:653px;width:5px;height:18px;background:#6cc4a4;border-radius:1px;"></div>
<div style="left:1905px;top:653px;width:5px;height:18px;background:#6cc4a4;border-radius:1px;"></div>
<div style="left:966px;top:672px;width:939px;height:286px;background:#232323;"></div>
<div style="left:975px;top:674px;width:930px;height:18px;background:repeating-linear-gradient(135deg, #8af5b8 0px, #72dc9c 1.8px, #72dc9c 11px, #8af5b8 12.5px, #62c88a 13.5px, #62c88a 24px, #8af5b8 25px);border-radius:2px;"></div>
<span class="t" style="left:983px;top:676px;color:#1a1a1a;font-size:12px;">Color Array</span>
<div style="left:975px;top:696px;width:930px;height:18px;background:repeating-linear-gradient(135deg, #e2ff98 0px, #c8ec78 1.8px, #c8ec78 11px, #e2ff98 12.5px, #b6d66c 13.5px, #b6d66c 24px, #e2ff98 25px);border-radius:2px;"></div>
<span class="t" style="left:983px;top:698px;color:#1a1a1a;font-size:12px;">Random [Index]</span>
<div style="left:975px;top:718px;width:930px;height:18px;background:repeating-linear-gradient(135deg, #e2ff98 0px, #c8ec78 1.8px, #c8ec78 11px, #e2ff98 12.5px, #b6d66c 13.5px, #b6d66c 24px, #e2ff98 25px);border-radius:2px;"></div>
<span class="t" style="left:983px;top:720px;color:#1a1a1a;font-size:12px;">Oscillator [Position.Z] Cosine</span>
<div style="left:975px;top:740px;width:930px;height:18px;background:repeating-linear-gradient(135deg, #e2ff98 0px, #c8ec78 1.8px, #c8ec78 11px, #e2ff98 12.5px, #b6d66c 13.5px, #b6d66c 24px, #e2ff98 25px);border-radius:2px;"></div>
<span class="t" style="left:983px;top:742px;color:#1a1a1a;font-size:12px;">Frame [Time]</span>
<div style="left:975px;top:762px;width:930px;height:18px;background:repeating-linear-gradient(135deg, #e2ff98 0px, #c8ec78 1.8px, #c8ec78 11px, #e2ff98 12.5px, #b6d66c 13.5px, #b6d66c 24px, #e2ff98 25px);border-radius:2px;"></div>
<span class="t" style="left:983px;top:764px;color:#1a1a1a;font-size:12px;">Oscillator [Position.X] Sine</span>
<div style="left:975px;top:784px;width:930px;height:18px;background:repeating-linear-gradient(135deg, #e2ff98 0px, #c8ec78 1.8px, #c8ec78 11px, #e2ff98 12.5px, #b6d66c 13.5px, #b6d66c 24px, #e2ff98 25px);border-radius:2px;"></div>
<span class="t" style="left:983px;top:786px;color:#1a1a1a;font-size:12px;">3D Matrix [Duplicator]</span>
<div style="left:975px;top:806px;width:930px;height:18px;background:repeating-linear-gradient(135deg, #ffacd0 0px, #f48cb8 1.8px, #f48cb8 11px, #ffacd0 12.5px, #dc7ca6 13.5px, #dc7ca6 24px, #ffacd0 25px);border-radius:2px;"></div>
<span class="t" style="left:983px;top:808px;color:#ffffff;font-size:12px;">Blur [Sub-Mesh [Duplicator]]</span>
<div style="left:975px;top:828px;width:930px;height:18px;background:#d8f290;border:1.5px solid #f8fff4;border-radius:2px;background-image:radial-gradient(#9cc45a 0.9px, transparent 1.3px);background-size:3px 3px;"></div>
<span class="t" style="left:983px;top:830px;color:#1a1a1a;font-size:12px;">Sub-Mesh [Duplicator]</span>
<div style="left:975px;top:850px;width:930px;height:18px;background:#fce57a;border-radius:2px;"></div>
<span class="t" style="left:983px;top:852px;color:#1a1a1a;font-size:12px;">Duplicator</span>
<div style="left:975px;top:872px;width:930px;height:18px;background:#fce57a;border-radius:2px;"></div>
<span class="t" style="left:983px;top:874px;color:#1a1a1a;font-size:12px;">Ellipse Shape</span>
<div style="left:975px;top:894px;width:930px;height:18px;background:repeating-linear-gradient(135deg, #7aa6ff 0px, #5f8de8 1.8px, #5f8de8 11px, #7aa6ff 12.5px, #5280d8 13.5px, #5280d8 24px, #7aa6ff 25px);border-radius:2px;"></div>
<span class="t" style="left:983px;top:896px;color:#ffffff;font-size:12px;">Index Context [Number]</span>
<div style="left:975px;top:916px;width:930px;height:18px;background:repeating-linear-gradient(135deg, #7aa6ff 0px, #5f8de8 1.8px, #5f8de8 11px, #7aa6ff 12.5px, #5280d8 13.5px, #5280d8 24px, #7aa6ff 25px);border-radius:2px;"></div>
<span class="t" style="left:983px;top:918px;color:#ffffff;font-size:12px;">String Generator [String]</span>
<div style="left:975px;top:938px;width:930px;height:18px;background:#b98ef5;border-radius:2px;"></div>
<span class="t" style="left:983px;top:940px;color:#ffffff;font-size:12px;">Cavalry</span>
<div style="left:1272px;top:653px;width:1px;height:305px;background:#5fbfa0;"></div>
<svg style="position:absolute;left:1265px;top:644px;" width="15" height="9" viewBox="0 0 15 9"><path d="M0 0 H15 L7.5 9Z" fill="#6cc4a4"/></svg>
<div style="left:966px;top:964px;width:947px;height:10px;background:#555;border-radius:5px;"></div>
<div style="left:970px;top:978px;width:18px;height:19px;background:#2b2b2b;background:#2b2b2b;border:1px solid #1f1f1f;border-radius:4px;box-shadow:inset 0 1px 0 #505050;"></div>
<svg style="position:absolute;left:971px;top:980px;" width="16" height="15" viewBox="0 0 16 15"><path d="M2 3 H14 M4 7 H12 M2 11 H6 M9 11 H12" stroke="#ddd" stroke-width="1.6"/></svg>
<div style="left:990px;top:979px;width:150px;height:17px;background:#2a2a2a;border-radius:3px;"></div>
<span class="t" style="left:992px;top:981px;color:#e6e6e6;font-size:12px;">Default Keyframe Layer</span>
<div style="left:1146px;top:979px;width:70px;height:17px;background:#2a2a2a;border-radius:3px;"></div>
<span class="t" style="left:1152px;top:981px;color:#555;font-size:12px;">F</span>
<span class="t" style="left:1164px;top:981px;color:#e6e6e6;font-size:12px;">-</span>
<span class="t" style="left:1222px;top:981px;color:#e6e6e6;font-size:12px;">Align:</span>
<div style="left:1259px;top:978px;width:53px;height:19px;background:#2b2b2b;border:1px solid #1f1f1f;border-radius:4px;box-shadow:inset 0 1px 0 #505050;"></div>
<div style="left:1276.6666666666667px;top:979px;width:1px;height:17px;background:#1f1f1f;"></div>
<div style="left:1294.3333333333333px;top:979px;width:1px;height:17px;background:#1f1f1f;"></div>
<svg style="position:absolute;left:1259.0px;top:978px;" width="17.666666666666668" height="19" viewBox="0 0 17.666666666666668 19"><path d="M3.5 3 V16" stroke="#dcdcdc"/><rect x="5.5" y="6" width="4" height="2" fill="#dcdcdc"/><rect x="5.5" y="11" width="9" height="2" fill="#dcdcdc"/></svg>
<svg style="position:absolute;left:1276.6666666666667px;top:978px;" width="17.666666666666668" height="19" viewBox="0 0 17.666666666666668 19"><path d="M9 3 V16" stroke="#dcdcdc" stroke-dasharray="2 1"/><rect x="5" y="6" width="8" height="2" fill="#dcdcdc"/><rect x="3" y="11" width="12" height="2" fill="#dcdcdc"/></svg>
<svg style="position:absolute;left:1294.3333333333333px;top:978px;" width="17.666666666666668" height="19" viewBox="0 0 17.666666666666668 19"><path d="M14.5 3 V16" stroke="#dcdcdc"/><rect x="8.5" y="6" width="4" height="2" fill="#dcdcdc"/><rect x="3.5" y="11" width="9" height="2" fill="#dcdcdc"/></svg>
<div style="left:1315px;top:978px;width:20px;height:19px;background:#2b2b2b;background:#2b2b2b;border:1px solid #1f1f1f;border-radius:4px;box-shadow:inset 0 1px 0 #505050;"></div>
<svg style="position:absolute;left:1315px;top:978px;" width="20" height="19" viewBox="0 0 20 19"><rect x="4" y="4" width="12" height="11" fill="none" stroke="#dcdcdc" stroke-dasharray="2 1.5"/><rect x="9" y="8.5" width="2" height="2" fill="#dcdcdc"/></svg>
<div style="left:1337px;top:978px;width:31px;height:19px;background:#2b2b2b;border:1px solid #1f1f1f;border-radius:4px;box-shadow:inset 0 1px 0 #505050;"></div>
<div style="left:1352.5px;top:979px;width:1px;height:17px;background:#1f1f1f;"></div>
<svg style="position:absolute;left:1337.0px;top:978px;" width="15.5" height="19" viewBox="0 0 15.5 19"><path d="M4 12 A5 5 0 1 1 13 12" fill="none" stroke="#ccc" stroke-width="2.2"/></svg>
<svg style="position:absolute;left:1352.5px;top:978px;" width="15.5" height="19" viewBox="0 0 15.5 19"><path d="M4 6 L11 10 L4 14Z" fill="none" stroke="#888" stroke-width="1"/></svg>
<div style="left:1371px;top:978px;width:32px;height:19px;background:#2b2b2b;border:1px solid #1f1f1f;border-radius:4px;box-shadow:inset 0 1px 0 #505050;"></div>
<div style="left:1387.0px;top:979px;width:1px;height:17px;background:#1f1f1f;"></div>
<svg style="position:absolute;left:1371.0px;top:978px;" width="16.0" height="19" viewBox="0 0 16.0 19"><path d="M2 10 H14 M6 5 V15 M9 7 V13" stroke="#dcdcdc" stroke-width="1"/></svg>
<svg style="position:absolute;left:1387.0px;top:978px;" width="16.0" height="19" viewBox="0 0 16.0 19"><path d="M4 6 L11 10 L4 14Z" fill="none" stroke="#888" stroke-width="1"/></svg>
<svg style="position:absolute;left:1743px;top:980px;" width="16" height="16" viewBox="0 0 16 16"><circle cx="6.5" cy="6.5" r="5" fill="none" stroke="#ccc" stroke-width="1.2"/><path d="M4 6.5 H9" stroke="#ccc" stroke-width="1.2"/><path d="M10 10 L13 13" stroke="#ccc" stroke-width="1.8"/></svg>
<div style="left:1766px;top:985px;width:115px;height:4px;background:#555;border-radius:2px;"></div>
<svg style="position:absolute;left:1760px;top:980px;" width="14" height="14" viewBox="0 0 14 14"><circle cx="7" cy="7" r="6" fill="#5fc3a0"/><circle cx="7" cy="7" r="2" fill="#4a9f84"/></svg>
<svg style="position:absolute;left:1887px;top:980px;" width="16" height="16" viewBox="0 0 16 16"><circle cx="6.5" cy="6.5" r="5" fill="none" stroke="#ccc" stroke-width="1.2"/><path d="M4 6.5 H9 M6.5 4 V9" stroke="#ccc" stroke-width="1.2"/><path d="M10 10 L13 13" stroke="#ccc" stroke-width="1.8"/></svg>
<div style="left:498px;top:1010px;width:2px;height:2px;background:#8a8a8a;"></div>
<div style="left:498px;top:1014px;width:2px;height:2px;background:#8a8a8a;"></div>
<div style="left:498px;top:1018px;width:2px;height:2px;background:#8a8a8a;"></div>
<div style="left:507px;top:1006px;width:17px;height:18px;background:#2b2b2b;background:#2b2b2b;border:1px solid #1f1f1f;border-radius:4px;box-shadow:inset 0 1px 0 #505050;"></div>
<svg style="position:absolute;left:508px;top:1007px;" width="15" height="15" viewBox="0 0 15 15"><path d="M2 2 H13 V10 H9 L12 13 L6 10 H2Z" fill="#ddd"/><path d="M4 4.5 H11 M4 6.5 H11 M4 8.5 H9" stroke="#555" stroke-width="1"/></svg>
<div style="left:529px;top:1008px;width:17px;height:14px;background:#2ecc71;border-radius:2px;"></div>
<span class="t" style="left:534px;top:1009px;color:#111;font-size:12px;">2</span>
<div style="left:555px;top:1012px;width:5px;height:5px;background:#2ecc71;border-radius:50%;"></div>
<span class="t" style="left:565px;top:1009px;color:#e6e6e6;font-size:12px;letter-spacing:-0.11px;">Connected: <span style="color:#d070e0">Oscillator [Position.X] Sine</span> to <span style="color:#c8b060">Oscillator [Position.Z] Cosine.</span></span>
<span class="t" style="left:1482px;top:1009px;color:#dddddd;font-size:12px;letter-spacing:-0.721px;font-style:italic;">Click to see next message</span>
<div style="left:1610px;top:1006px;width:80px;height:18px;background:#d4bd6a;border-radius:2px;"></div>
<span class="t" style="left:1616px;top:1009px;color:#2a2a2a;font-size:12px;letter-spacing:-0.461px;">Feedback</span>
<svg style="position:absolute;left:1670px;top:1007px;" width="16" height="16" viewBox="0 0 16 16"><path d="M3 2 H10 L13 5 V14 H3Z" fill="#fff" stroke="#bbb" stroke-width="0.8"/><path d="M6 12 L12 6" stroke="#f07030" stroke-width="2"/></svg>
<div style="left:1693px;top:1006px;width:109px;height:18px;background:#2ecc71;border-radius:2px;"></div>
<span class="t" style="left:1698px;top:1009px;color:#1a1a1a;font-size:12px;letter-spacing:-0.169px;">Upgrade to Pro</span>
<svg style="position:absolute;left:1780px;top:1007px;" width="16" height="16" viewBox="0 0 16 16"><ellipse cx="5" cy="10" rx="3.5" ry="4.5" fill="#f5c518"/><ellipse cx="11" cy="10" rx="3.5" ry="4.5" fill="#f5c518"/></svg>
<div style="left:1805px;top:1006px;width:106px;height:18px;background:#3daee9;border-radius:2px;"></div>
<span class="t" style="left:1810px;top:1009px;color:#1a1a1a;font-size:12px;letter-spacing:-0.283px;">Tips and Tricks</span>
<svg style="position:absolute;left:1890px;top:1007px;" width="16" height="16" viewBox="0 0 16 16"><path d="M14 2 C9 2 5 6 4 10 L6 12 C10 11 14 7 14 2Z" fill="#f0f0f0" stroke="#e03050" stroke-width="1.2"/><circle cx="10" cy="6" r="1.4" fill="#5ab0e0"/><path d="M4 10 L1 11 L5 7Z M6 12 L5 15 L9 11Z" fill="#e03050"/><path d="M3.5 12.5 L1.5 14.5" stroke="#f08030" stroke-width="2"/></svg>
</body></html>
